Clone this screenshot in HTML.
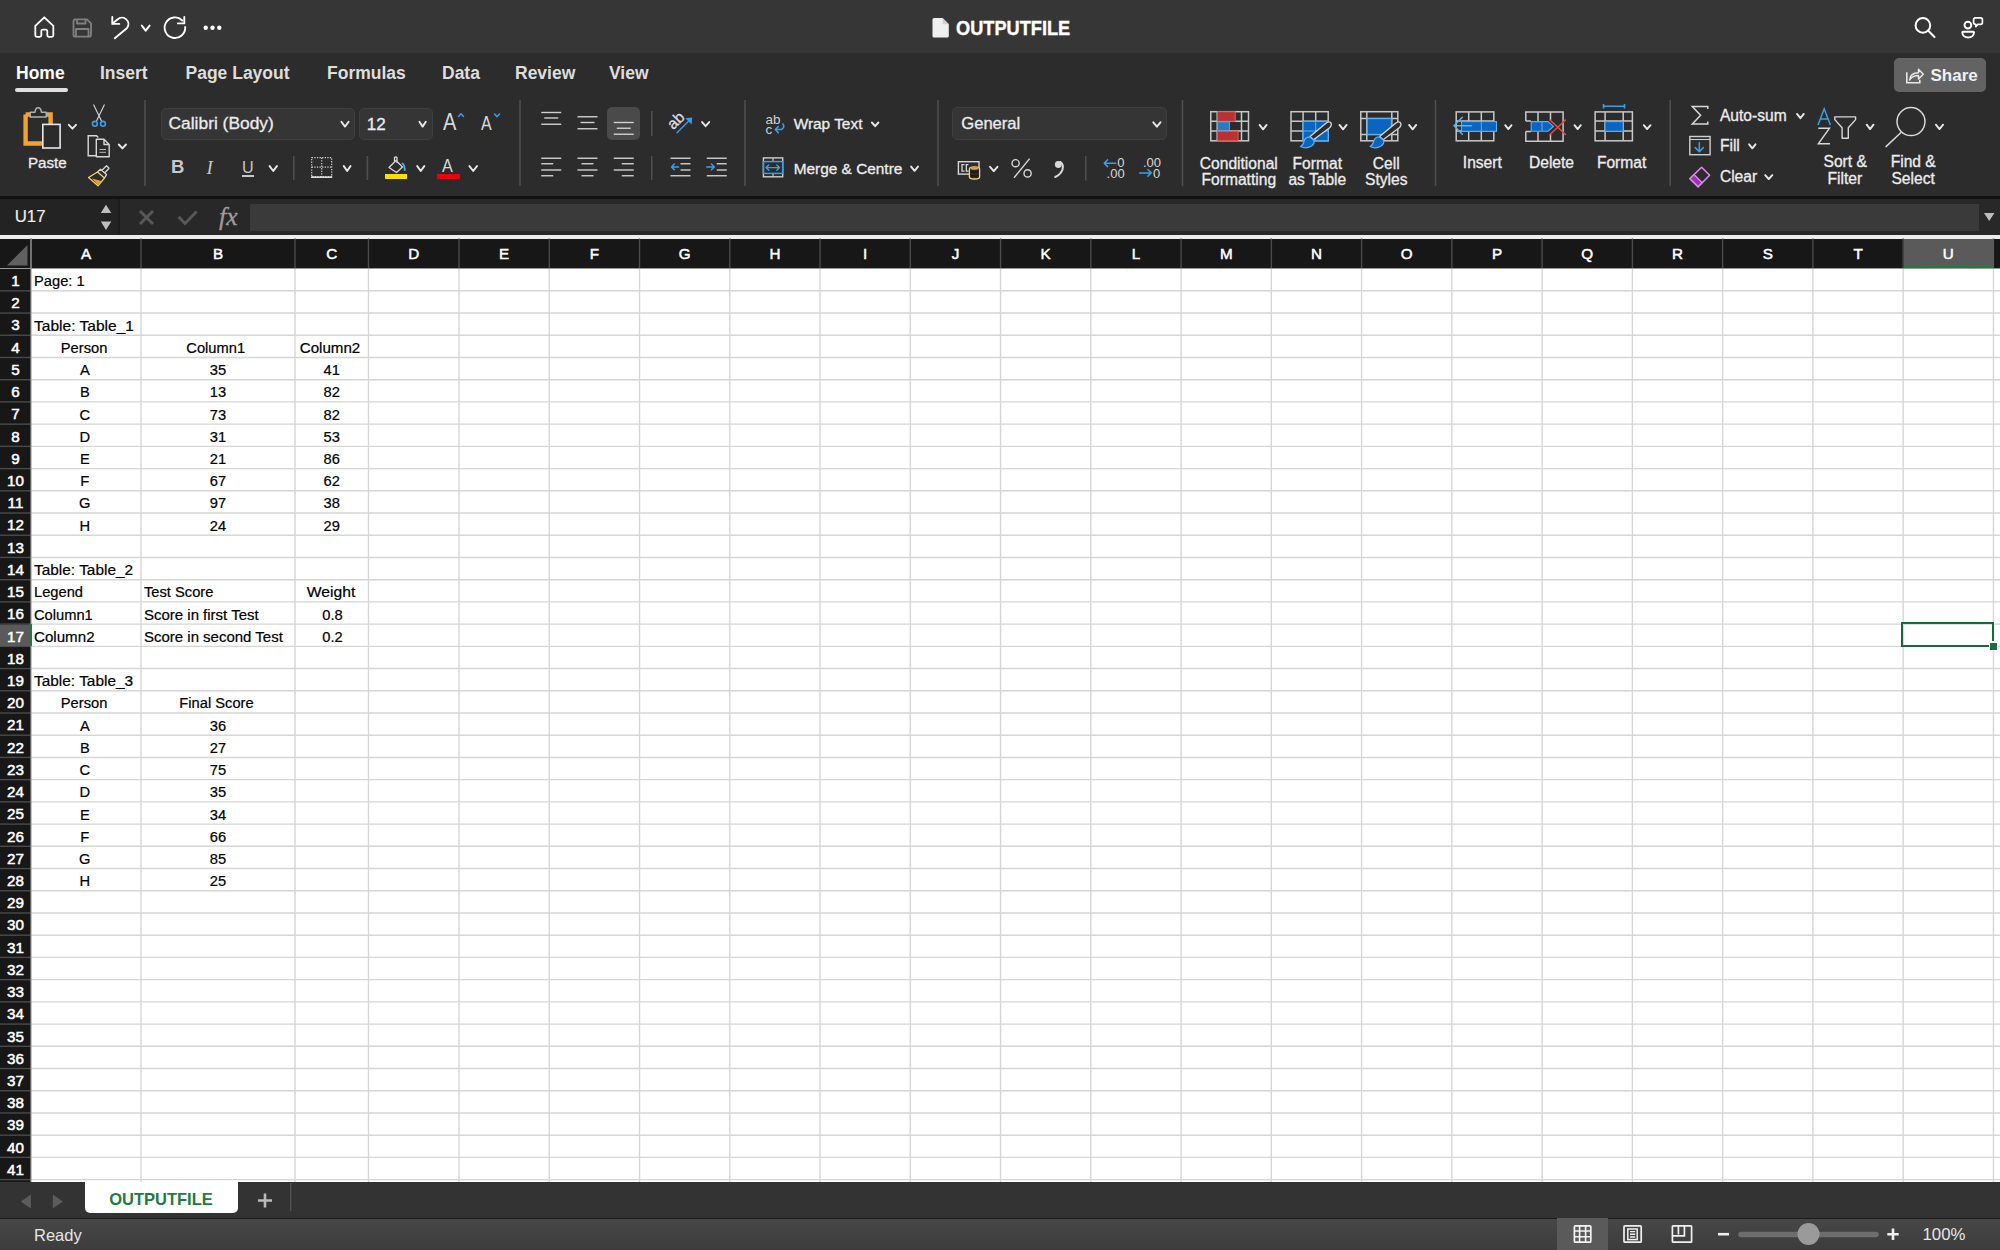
<!DOCTYPE html>
<html><head><meta charset="utf-8"><title>OUTPUTFILE</title>
<style>
html,body{margin:0;padding:0;width:2000px;height:1250px;overflow:hidden;background:#2c2c2c;}
body{position:relative;font-family:"Liberation Sans",sans-serif;}
svg{position:absolute;overflow:visible;}
</style></head><body>

<div style="position:absolute;left:0px;top:0px;width:2000px;height:53px;background:#363636;"></div>
<div style="position:absolute;left:0px;top:53px;width:2000px;height:144px;background:#2c2c2c;"></div>
<div style="position:absolute;left:0px;top:196px;width:2000px;height:3px;background:#121212;"></div>
<div style="position:absolute;left:0px;top:199px;width:2000px;height:36px;background:#282828;"></div>
<div style="position:absolute;left:0px;top:199px;width:118px;height:36px;background:#232323;"></div>
<div style="position:absolute;left:118px;top:199px;width:1.5px;height:36px;background:#1c1c1c;"></div>
<div style="position:absolute;left:250px;top:204px;width:1729px;height:26.5px;background:#3a3a3a;"></div>
<div style="position:absolute;left:0px;top:235px;width:2000px;height:3.5px;background:#ededed;"></div>
<div style="position:absolute;left:0px;top:238.5px;width:2000px;height:30px;background:#171717;"></div>
<div style="position:absolute;left:0px;top:268.5px;width:31px;height:913.5px;background:#171717;"></div>
<div style="position:absolute;left:31px;top:268.5px;width:1969px;height:913.5px;background:#ffffff;"></div>
<div style="position:absolute;left:0px;top:1182px;width:2000px;height:37px;background:#333333;"></div>
<div style="position:absolute;left:0;top:1219px;width:2000px;height:31px;background:linear-gradient(#474747,#3c3c3c);"></div>
<div style="position:absolute;left:0px;top:1217.5px;width:2000px;height:1.8px;background:#1c1c1c;"></div>
<svg style="left:0;top:0" width="2000" height="1250"><line x1="31" y1="290.82" x2="2000" y2="290.82" stroke="#d6d6d6" stroke-width="1.4"/><line x1="31" y1="313.04" x2="2000" y2="313.04" stroke="#d6d6d6" stroke-width="1.4"/><line x1="31" y1="335.26" x2="2000" y2="335.26" stroke="#d6d6d6" stroke-width="1.4"/><line x1="31" y1="357.48" x2="2000" y2="357.48" stroke="#d6d6d6" stroke-width="1.4"/><line x1="31" y1="379.70" x2="2000" y2="379.70" stroke="#d6d6d6" stroke-width="1.4"/><line x1="31" y1="401.92" x2="2000" y2="401.92" stroke="#d6d6d6" stroke-width="1.4"/><line x1="31" y1="424.14" x2="2000" y2="424.14" stroke="#d6d6d6" stroke-width="1.4"/><line x1="31" y1="446.36" x2="2000" y2="446.36" stroke="#d6d6d6" stroke-width="1.4"/><line x1="31" y1="468.58" x2="2000" y2="468.58" stroke="#d6d6d6" stroke-width="1.4"/><line x1="31" y1="490.80" x2="2000" y2="490.80" stroke="#d6d6d6" stroke-width="1.4"/><line x1="31" y1="513.02" x2="2000" y2="513.02" stroke="#d6d6d6" stroke-width="1.4"/><line x1="31" y1="535.24" x2="2000" y2="535.24" stroke="#d6d6d6" stroke-width="1.4"/><line x1="31" y1="557.46" x2="2000" y2="557.46" stroke="#d6d6d6" stroke-width="1.4"/><line x1="31" y1="579.68" x2="2000" y2="579.68" stroke="#d6d6d6" stroke-width="1.4"/><line x1="31" y1="601.90" x2="2000" y2="601.90" stroke="#d6d6d6" stroke-width="1.4"/><line x1="31" y1="624.12" x2="2000" y2="624.12" stroke="#d6d6d6" stroke-width="1.4"/><line x1="31" y1="646.34" x2="2000" y2="646.34" stroke="#d6d6d6" stroke-width="1.4"/><line x1="31" y1="668.56" x2="2000" y2="668.56" stroke="#d6d6d6" stroke-width="1.4"/><line x1="31" y1="690.78" x2="2000" y2="690.78" stroke="#d6d6d6" stroke-width="1.4"/><line x1="31" y1="713.00" x2="2000" y2="713.00" stroke="#d6d6d6" stroke-width="1.4"/><line x1="31" y1="735.22" x2="2000" y2="735.22" stroke="#d6d6d6" stroke-width="1.4"/><line x1="31" y1="757.44" x2="2000" y2="757.44" stroke="#d6d6d6" stroke-width="1.4"/><line x1="31" y1="779.66" x2="2000" y2="779.66" stroke="#d6d6d6" stroke-width="1.4"/><line x1="31" y1="801.88" x2="2000" y2="801.88" stroke="#d6d6d6" stroke-width="1.4"/><line x1="31" y1="824.10" x2="2000" y2="824.10" stroke="#d6d6d6" stroke-width="1.4"/><line x1="31" y1="846.32" x2="2000" y2="846.32" stroke="#d6d6d6" stroke-width="1.4"/><line x1="31" y1="868.54" x2="2000" y2="868.54" stroke="#d6d6d6" stroke-width="1.4"/><line x1="31" y1="890.76" x2="2000" y2="890.76" stroke="#d6d6d6" stroke-width="1.4"/><line x1="31" y1="912.98" x2="2000" y2="912.98" stroke="#d6d6d6" stroke-width="1.4"/><line x1="31" y1="935.20" x2="2000" y2="935.20" stroke="#d6d6d6" stroke-width="1.4"/><line x1="31" y1="957.42" x2="2000" y2="957.42" stroke="#d6d6d6" stroke-width="1.4"/><line x1="31" y1="979.64" x2="2000" y2="979.64" stroke="#d6d6d6" stroke-width="1.4"/><line x1="31" y1="1001.86" x2="2000" y2="1001.86" stroke="#d6d6d6" stroke-width="1.4"/><line x1="31" y1="1024.08" x2="2000" y2="1024.08" stroke="#d6d6d6" stroke-width="1.4"/><line x1="31" y1="1046.30" x2="2000" y2="1046.30" stroke="#d6d6d6" stroke-width="1.4"/><line x1="31" y1="1068.52" x2="2000" y2="1068.52" stroke="#d6d6d6" stroke-width="1.4"/><line x1="31" y1="1090.74" x2="2000" y2="1090.74" stroke="#d6d6d6" stroke-width="1.4"/><line x1="31" y1="1112.96" x2="2000" y2="1112.96" stroke="#d6d6d6" stroke-width="1.4"/><line x1="31" y1="1135.18" x2="2000" y2="1135.18" stroke="#d6d6d6" stroke-width="1.4"/><line x1="31" y1="1157.40" x2="2000" y2="1157.40" stroke="#d6d6d6" stroke-width="1.4"/><line x1="31" y1="1179.62" x2="2000" y2="1179.62" stroke="#d6d6d6" stroke-width="1.4"/><line x1="141.00" y1="268.5" x2="141.00" y2="1182" stroke="#d6d6d6" stroke-width="1.4"/><line x1="295.00" y1="268.5" x2="295.00" y2="1182" stroke="#d6d6d6" stroke-width="1.4"/><line x1="368.50" y1="268.5" x2="368.50" y2="1182" stroke="#d6d6d6" stroke-width="1.4"/><line x1="459.00" y1="268.5" x2="459.00" y2="1182" stroke="#d6d6d6" stroke-width="1.4"/><line x1="549.26" y1="268.5" x2="549.26" y2="1182" stroke="#d6d6d6" stroke-width="1.4"/><line x1="639.52" y1="268.5" x2="639.52" y2="1182" stroke="#d6d6d6" stroke-width="1.4"/><line x1="729.78" y1="268.5" x2="729.78" y2="1182" stroke="#d6d6d6" stroke-width="1.4"/><line x1="820.04" y1="268.5" x2="820.04" y2="1182" stroke="#d6d6d6" stroke-width="1.4"/><line x1="910.30" y1="268.5" x2="910.30" y2="1182" stroke="#d6d6d6" stroke-width="1.4"/><line x1="1000.56" y1="268.5" x2="1000.56" y2="1182" stroke="#d6d6d6" stroke-width="1.4"/><line x1="1090.82" y1="268.5" x2="1090.82" y2="1182" stroke="#d6d6d6" stroke-width="1.4"/><line x1="1181.08" y1="268.5" x2="1181.08" y2="1182" stroke="#d6d6d6" stroke-width="1.4"/><line x1="1271.34" y1="268.5" x2="1271.34" y2="1182" stroke="#d6d6d6" stroke-width="1.4"/><line x1="1361.60" y1="268.5" x2="1361.60" y2="1182" stroke="#d6d6d6" stroke-width="1.4"/><line x1="1451.86" y1="268.5" x2="1451.86" y2="1182" stroke="#d6d6d6" stroke-width="1.4"/><line x1="1542.12" y1="268.5" x2="1542.12" y2="1182" stroke="#d6d6d6" stroke-width="1.4"/><line x1="1632.38" y1="268.5" x2="1632.38" y2="1182" stroke="#d6d6d6" stroke-width="1.4"/><line x1="1722.64" y1="268.5" x2="1722.64" y2="1182" stroke="#d6d6d6" stroke-width="1.4"/><line x1="1812.90" y1="268.5" x2="1812.90" y2="1182" stroke="#d6d6d6" stroke-width="1.4"/><line x1="1903.16" y1="268.5" x2="1903.16" y2="1182" stroke="#d6d6d6" stroke-width="1.4"/><line x1="1993.42" y1="268.5" x2="1993.42" y2="1182" stroke="#d6d6d6" stroke-width="1.4"/><line x1="31.00" y1="238.5" x2="31.00" y2="268.5" stroke="#4a4a4a" stroke-width="1.4"/><line x1="141.00" y1="238.5" x2="141.00" y2="268.5" stroke="#4a4a4a" stroke-width="1.4"/><line x1="295.00" y1="238.5" x2="295.00" y2="268.5" stroke="#4a4a4a" stroke-width="1.4"/><line x1="368.50" y1="238.5" x2="368.50" y2="268.5" stroke="#4a4a4a" stroke-width="1.4"/><line x1="459.00" y1="238.5" x2="459.00" y2="268.5" stroke="#4a4a4a" stroke-width="1.4"/><line x1="549.26" y1="238.5" x2="549.26" y2="268.5" stroke="#4a4a4a" stroke-width="1.4"/><line x1="639.52" y1="238.5" x2="639.52" y2="268.5" stroke="#4a4a4a" stroke-width="1.4"/><line x1="729.78" y1="238.5" x2="729.78" y2="268.5" stroke="#4a4a4a" stroke-width="1.4"/><line x1="820.04" y1="238.5" x2="820.04" y2="268.5" stroke="#4a4a4a" stroke-width="1.4"/><line x1="910.30" y1="238.5" x2="910.30" y2="268.5" stroke="#4a4a4a" stroke-width="1.4"/><line x1="1000.56" y1="238.5" x2="1000.56" y2="268.5" stroke="#4a4a4a" stroke-width="1.4"/><line x1="1090.82" y1="238.5" x2="1090.82" y2="268.5" stroke="#4a4a4a" stroke-width="1.4"/><line x1="1181.08" y1="238.5" x2="1181.08" y2="268.5" stroke="#4a4a4a" stroke-width="1.4"/><line x1="1271.34" y1="238.5" x2="1271.34" y2="268.5" stroke="#4a4a4a" stroke-width="1.4"/><line x1="1361.60" y1="238.5" x2="1361.60" y2="268.5" stroke="#4a4a4a" stroke-width="1.4"/><line x1="1451.86" y1="238.5" x2="1451.86" y2="268.5" stroke="#4a4a4a" stroke-width="1.4"/><line x1="1542.12" y1="238.5" x2="1542.12" y2="268.5" stroke="#4a4a4a" stroke-width="1.4"/><line x1="1632.38" y1="238.5" x2="1632.38" y2="268.5" stroke="#4a4a4a" stroke-width="1.4"/><line x1="1722.64" y1="238.5" x2="1722.64" y2="268.5" stroke="#4a4a4a" stroke-width="1.4"/><line x1="1812.90" y1="238.5" x2="1812.90" y2="268.5" stroke="#4a4a4a" stroke-width="1.4"/><line x1="1903.16" y1="238.5" x2="1903.16" y2="268.5" stroke="#4a4a4a" stroke-width="1.4"/><line x1="1993.42" y1="238.5" x2="1993.42" y2="268.5" stroke="#4a4a4a" stroke-width="1.4"/><line x1="0" y1="290.82" x2="31" y2="290.82" stroke="#4a4a4a" stroke-width="1.4"/><line x1="0" y1="313.04" x2="31" y2="313.04" stroke="#4a4a4a" stroke-width="1.4"/><line x1="0" y1="335.26" x2="31" y2="335.26" stroke="#4a4a4a" stroke-width="1.4"/><line x1="0" y1="357.48" x2="31" y2="357.48" stroke="#4a4a4a" stroke-width="1.4"/><line x1="0" y1="379.70" x2="31" y2="379.70" stroke="#4a4a4a" stroke-width="1.4"/><line x1="0" y1="401.92" x2="31" y2="401.92" stroke="#4a4a4a" stroke-width="1.4"/><line x1="0" y1="424.14" x2="31" y2="424.14" stroke="#4a4a4a" stroke-width="1.4"/><line x1="0" y1="446.36" x2="31" y2="446.36" stroke="#4a4a4a" stroke-width="1.4"/><line x1="0" y1="468.58" x2="31" y2="468.58" stroke="#4a4a4a" stroke-width="1.4"/><line x1="0" y1="490.80" x2="31" y2="490.80" stroke="#4a4a4a" stroke-width="1.4"/><line x1="0" y1="513.02" x2="31" y2="513.02" stroke="#4a4a4a" stroke-width="1.4"/><line x1="0" y1="535.24" x2="31" y2="535.24" stroke="#4a4a4a" stroke-width="1.4"/><line x1="0" y1="557.46" x2="31" y2="557.46" stroke="#4a4a4a" stroke-width="1.4"/><line x1="0" y1="579.68" x2="31" y2="579.68" stroke="#4a4a4a" stroke-width="1.4"/><line x1="0" y1="601.90" x2="31" y2="601.90" stroke="#4a4a4a" stroke-width="1.4"/><line x1="0" y1="624.12" x2="31" y2="624.12" stroke="#4a4a4a" stroke-width="1.4"/><line x1="0" y1="646.34" x2="31" y2="646.34" stroke="#4a4a4a" stroke-width="1.4"/><line x1="0" y1="668.56" x2="31" y2="668.56" stroke="#4a4a4a" stroke-width="1.4"/><line x1="0" y1="690.78" x2="31" y2="690.78" stroke="#4a4a4a" stroke-width="1.4"/><line x1="0" y1="713.00" x2="31" y2="713.00" stroke="#4a4a4a" stroke-width="1.4"/><line x1="0" y1="735.22" x2="31" y2="735.22" stroke="#4a4a4a" stroke-width="1.4"/><line x1="0" y1="757.44" x2="31" y2="757.44" stroke="#4a4a4a" stroke-width="1.4"/><line x1="0" y1="779.66" x2="31" y2="779.66" stroke="#4a4a4a" stroke-width="1.4"/><line x1="0" y1="801.88" x2="31" y2="801.88" stroke="#4a4a4a" stroke-width="1.4"/><line x1="0" y1="824.10" x2="31" y2="824.10" stroke="#4a4a4a" stroke-width="1.4"/><line x1="0" y1="846.32" x2="31" y2="846.32" stroke="#4a4a4a" stroke-width="1.4"/><line x1="0" y1="868.54" x2="31" y2="868.54" stroke="#4a4a4a" stroke-width="1.4"/><line x1="0" y1="890.76" x2="31" y2="890.76" stroke="#4a4a4a" stroke-width="1.4"/><line x1="0" y1="912.98" x2="31" y2="912.98" stroke="#4a4a4a" stroke-width="1.4"/><line x1="0" y1="935.20" x2="31" y2="935.20" stroke="#4a4a4a" stroke-width="1.4"/><line x1="0" y1="957.42" x2="31" y2="957.42" stroke="#4a4a4a" stroke-width="1.4"/><line x1="0" y1="979.64" x2="31" y2="979.64" stroke="#4a4a4a" stroke-width="1.4"/><line x1="0" y1="1001.86" x2="31" y2="1001.86" stroke="#4a4a4a" stroke-width="1.4"/><line x1="0" y1="1024.08" x2="31" y2="1024.08" stroke="#4a4a4a" stroke-width="1.4"/><line x1="0" y1="1046.30" x2="31" y2="1046.30" stroke="#4a4a4a" stroke-width="1.4"/><line x1="0" y1="1068.52" x2="31" y2="1068.52" stroke="#4a4a4a" stroke-width="1.4"/><line x1="0" y1="1090.74" x2="31" y2="1090.74" stroke="#4a4a4a" stroke-width="1.4"/><line x1="0" y1="1112.96" x2="31" y2="1112.96" stroke="#4a4a4a" stroke-width="1.4"/><line x1="0" y1="1135.18" x2="31" y2="1135.18" stroke="#4a4a4a" stroke-width="1.4"/><line x1="0" y1="1157.40" x2="31" y2="1157.40" stroke="#4a4a4a" stroke-width="1.4"/><line x1="0" y1="1179.62" x2="31" y2="1179.62" stroke="#4a4a4a" stroke-width="1.4"/><line x1="0" y1="268.5" x2="2000" y2="268.5" stroke="#9a9a9a" stroke-width="1.2"/><line x1="31" y1="238.5" x2="31" y2="1182" stroke="#9a9a9a" stroke-width="1.2"/></svg>
<div style="position:absolute;left:1903.5px;top:238.5px;width:90px;height:29.5px;background:#5a5a5a;"></div>
<div style="position:absolute;left:1903.5px;top:265.5px;width:90px;height:2.5px;background:#1e7b43;"></div>
<div style="position:absolute;left:0px;top:624.82px;width:29px;height:20.8px;background:#5a5a5a;"></div>
<div style="position:absolute;left:28.8px;top:624.12px;width:3px;height:22.3px;background:#1e7b43;"></div>
<div style="position:absolute;left:46.00px;top:246.33px;width:80px;text-align:center;font:400 15.2px/15.2px 'Liberation Sans', sans-serif;color:#ffffff;white-space:nowrap;letter-spacing:0px;-webkit-text-stroke:0.5px #fff;">A</div>
<div style="position:absolute;left:178.00px;top:246.33px;width:80px;text-align:center;font:400 15.2px/15.2px 'Liberation Sans', sans-serif;color:#ffffff;white-space:nowrap;letter-spacing:0px;-webkit-text-stroke:0.5px #fff;">B</div>
<div style="position:absolute;left:291.75px;top:246.33px;width:80px;text-align:center;font:400 15.2px/15.2px 'Liberation Sans', sans-serif;color:#ffffff;white-space:nowrap;letter-spacing:0px;-webkit-text-stroke:0.5px #fff;">C</div>
<div style="position:absolute;left:373.75px;top:246.33px;width:80px;text-align:center;font:400 15.2px/15.2px 'Liberation Sans', sans-serif;color:#ffffff;white-space:nowrap;letter-spacing:0px;-webkit-text-stroke:0.5px #fff;">D</div>
<div style="position:absolute;left:464.13px;top:246.33px;width:80px;text-align:center;font:400 15.2px/15.2px 'Liberation Sans', sans-serif;color:#ffffff;white-space:nowrap;letter-spacing:0px;-webkit-text-stroke:0.5px #fff;">E</div>
<div style="position:absolute;left:554.39px;top:246.33px;width:80px;text-align:center;font:400 15.2px/15.2px 'Liberation Sans', sans-serif;color:#ffffff;white-space:nowrap;letter-spacing:0px;-webkit-text-stroke:0.5px #fff;">F</div>
<div style="position:absolute;left:644.65px;top:246.33px;width:80px;text-align:center;font:400 15.2px/15.2px 'Liberation Sans', sans-serif;color:#ffffff;white-space:nowrap;letter-spacing:0px;-webkit-text-stroke:0.5px #fff;">G</div>
<div style="position:absolute;left:734.91px;top:246.33px;width:80px;text-align:center;font:400 15.2px/15.2px 'Liberation Sans', sans-serif;color:#ffffff;white-space:nowrap;letter-spacing:0px;-webkit-text-stroke:0.5px #fff;">H</div>
<div style="position:absolute;left:825.17px;top:246.33px;width:80px;text-align:center;font:400 15.2px/15.2px 'Liberation Sans', sans-serif;color:#ffffff;white-space:nowrap;letter-spacing:0px;-webkit-text-stroke:0.5px #fff;">I</div>
<div style="position:absolute;left:915.43px;top:246.33px;width:80px;text-align:center;font:400 15.2px/15.2px 'Liberation Sans', sans-serif;color:#ffffff;white-space:nowrap;letter-spacing:0px;-webkit-text-stroke:0.5px #fff;">J</div>
<div style="position:absolute;left:1005.69px;top:246.33px;width:80px;text-align:center;font:400 15.2px/15.2px 'Liberation Sans', sans-serif;color:#ffffff;white-space:nowrap;letter-spacing:0px;-webkit-text-stroke:0.5px #fff;">K</div>
<div style="position:absolute;left:1095.95px;top:246.33px;width:80px;text-align:center;font:400 15.2px/15.2px 'Liberation Sans', sans-serif;color:#ffffff;white-space:nowrap;letter-spacing:0px;-webkit-text-stroke:0.5px #fff;">L</div>
<div style="position:absolute;left:1186.21px;top:246.33px;width:80px;text-align:center;font:400 15.2px/15.2px 'Liberation Sans', sans-serif;color:#ffffff;white-space:nowrap;letter-spacing:0px;-webkit-text-stroke:0.5px #fff;">M</div>
<div style="position:absolute;left:1276.47px;top:246.33px;width:80px;text-align:center;font:400 15.2px/15.2px 'Liberation Sans', sans-serif;color:#ffffff;white-space:nowrap;letter-spacing:0px;-webkit-text-stroke:0.5px #fff;">N</div>
<div style="position:absolute;left:1366.73px;top:246.33px;width:80px;text-align:center;font:400 15.2px/15.2px 'Liberation Sans', sans-serif;color:#ffffff;white-space:nowrap;letter-spacing:0px;-webkit-text-stroke:0.5px #fff;">O</div>
<div style="position:absolute;left:1456.99px;top:246.33px;width:80px;text-align:center;font:400 15.2px/15.2px 'Liberation Sans', sans-serif;color:#ffffff;white-space:nowrap;letter-spacing:0px;-webkit-text-stroke:0.5px #fff;">P</div>
<div style="position:absolute;left:1547.25px;top:246.33px;width:80px;text-align:center;font:400 15.2px/15.2px 'Liberation Sans', sans-serif;color:#ffffff;white-space:nowrap;letter-spacing:0px;-webkit-text-stroke:0.5px #fff;">Q</div>
<div style="position:absolute;left:1637.51px;top:246.33px;width:80px;text-align:center;font:400 15.2px/15.2px 'Liberation Sans', sans-serif;color:#ffffff;white-space:nowrap;letter-spacing:0px;-webkit-text-stroke:0.5px #fff;">R</div>
<div style="position:absolute;left:1727.77px;top:246.33px;width:80px;text-align:center;font:400 15.2px/15.2px 'Liberation Sans', sans-serif;color:#ffffff;white-space:nowrap;letter-spacing:0px;-webkit-text-stroke:0.5px #fff;">S</div>
<div style="position:absolute;left:1818.03px;top:246.33px;width:80px;text-align:center;font:400 15.2px/15.2px 'Liberation Sans', sans-serif;color:#ffffff;white-space:nowrap;letter-spacing:0px;-webkit-text-stroke:0.5px #fff;">T</div>
<div style="position:absolute;left:1908.29px;top:246.33px;width:80px;text-align:center;font:400 15.2px/15.2px 'Liberation Sans', sans-serif;color:#ffffff;white-space:nowrap;letter-spacing:0px;-webkit-text-stroke:0.5px #fff;">U</div>
<div style="position:absolute;left:0.50px;top:273.03px;width:30px;text-align:center;font:400 15.2px/15.2px 'Liberation Sans', sans-serif;color:#ffffff;white-space:nowrap;letter-spacing:0px;-webkit-text-stroke:0.5px #fff;">1</div>
<div style="position:absolute;left:0.50px;top:295.25px;width:30px;text-align:center;font:400 15.2px/15.2px 'Liberation Sans', sans-serif;color:#ffffff;white-space:nowrap;letter-spacing:0px;-webkit-text-stroke:0.5px #fff;">2</div>
<div style="position:absolute;left:0.50px;top:317.47px;width:30px;text-align:center;font:400 15.2px/15.2px 'Liberation Sans', sans-serif;color:#ffffff;white-space:nowrap;letter-spacing:0px;-webkit-text-stroke:0.5px #fff;">3</div>
<div style="position:absolute;left:0.50px;top:339.69px;width:30px;text-align:center;font:400 15.2px/15.2px 'Liberation Sans', sans-serif;color:#ffffff;white-space:nowrap;letter-spacing:0px;-webkit-text-stroke:0.5px #fff;">4</div>
<div style="position:absolute;left:0.50px;top:361.91px;width:30px;text-align:center;font:400 15.2px/15.2px 'Liberation Sans', sans-serif;color:#ffffff;white-space:nowrap;letter-spacing:0px;-webkit-text-stroke:0.5px #fff;">5</div>
<div style="position:absolute;left:0.50px;top:384.13px;width:30px;text-align:center;font:400 15.2px/15.2px 'Liberation Sans', sans-serif;color:#ffffff;white-space:nowrap;letter-spacing:0px;-webkit-text-stroke:0.5px #fff;">6</div>
<div style="position:absolute;left:0.50px;top:406.35px;width:30px;text-align:center;font:400 15.2px/15.2px 'Liberation Sans', sans-serif;color:#ffffff;white-space:nowrap;letter-spacing:0px;-webkit-text-stroke:0.5px #fff;">7</div>
<div style="position:absolute;left:0.50px;top:428.57px;width:30px;text-align:center;font:400 15.2px/15.2px 'Liberation Sans', sans-serif;color:#ffffff;white-space:nowrap;letter-spacing:0px;-webkit-text-stroke:0.5px #fff;">8</div>
<div style="position:absolute;left:0.50px;top:450.79px;width:30px;text-align:center;font:400 15.2px/15.2px 'Liberation Sans', sans-serif;color:#ffffff;white-space:nowrap;letter-spacing:0px;-webkit-text-stroke:0.5px #fff;">9</div>
<div style="position:absolute;left:0.50px;top:473.01px;width:30px;text-align:center;font:400 15.2px/15.2px 'Liberation Sans', sans-serif;color:#ffffff;white-space:nowrap;letter-spacing:0px;-webkit-text-stroke:0.5px #fff;">10</div>
<div style="position:absolute;left:0.50px;top:495.23px;width:30px;text-align:center;font:400 15.2px/15.2px 'Liberation Sans', sans-serif;color:#ffffff;white-space:nowrap;letter-spacing:0px;-webkit-text-stroke:0.5px #fff;">11</div>
<div style="position:absolute;left:0.50px;top:517.45px;width:30px;text-align:center;font:400 15.2px/15.2px 'Liberation Sans', sans-serif;color:#ffffff;white-space:nowrap;letter-spacing:0px;-webkit-text-stroke:0.5px #fff;">12</div>
<div style="position:absolute;left:0.50px;top:539.67px;width:30px;text-align:center;font:400 15.2px/15.2px 'Liberation Sans', sans-serif;color:#ffffff;white-space:nowrap;letter-spacing:0px;-webkit-text-stroke:0.5px #fff;">13</div>
<div style="position:absolute;left:0.50px;top:561.89px;width:30px;text-align:center;font:400 15.2px/15.2px 'Liberation Sans', sans-serif;color:#ffffff;white-space:nowrap;letter-spacing:0px;-webkit-text-stroke:0.5px #fff;">14</div>
<div style="position:absolute;left:0.50px;top:584.11px;width:30px;text-align:center;font:400 15.2px/15.2px 'Liberation Sans', sans-serif;color:#ffffff;white-space:nowrap;letter-spacing:0px;-webkit-text-stroke:0.5px #fff;">15</div>
<div style="position:absolute;left:0.50px;top:606.33px;width:30px;text-align:center;font:400 15.2px/15.2px 'Liberation Sans', sans-serif;color:#ffffff;white-space:nowrap;letter-spacing:0px;-webkit-text-stroke:0.5px #fff;">16</div>
<div style="position:absolute;left:0.50px;top:628.55px;width:30px;text-align:center;font:400 15.2px/15.2px 'Liberation Sans', sans-serif;color:#ffffff;white-space:nowrap;letter-spacing:0px;-webkit-text-stroke:0.5px #fff;">17</div>
<div style="position:absolute;left:0.50px;top:650.77px;width:30px;text-align:center;font:400 15.2px/15.2px 'Liberation Sans', sans-serif;color:#ffffff;white-space:nowrap;letter-spacing:0px;-webkit-text-stroke:0.5px #fff;">18</div>
<div style="position:absolute;left:0.50px;top:672.99px;width:30px;text-align:center;font:400 15.2px/15.2px 'Liberation Sans', sans-serif;color:#ffffff;white-space:nowrap;letter-spacing:0px;-webkit-text-stroke:0.5px #fff;">19</div>
<div style="position:absolute;left:0.50px;top:695.21px;width:30px;text-align:center;font:400 15.2px/15.2px 'Liberation Sans', sans-serif;color:#ffffff;white-space:nowrap;letter-spacing:0px;-webkit-text-stroke:0.5px #fff;">20</div>
<div style="position:absolute;left:0.50px;top:717.43px;width:30px;text-align:center;font:400 15.2px/15.2px 'Liberation Sans', sans-serif;color:#ffffff;white-space:nowrap;letter-spacing:0px;-webkit-text-stroke:0.5px #fff;">21</div>
<div style="position:absolute;left:0.50px;top:739.65px;width:30px;text-align:center;font:400 15.2px/15.2px 'Liberation Sans', sans-serif;color:#ffffff;white-space:nowrap;letter-spacing:0px;-webkit-text-stroke:0.5px #fff;">22</div>
<div style="position:absolute;left:0.50px;top:761.87px;width:30px;text-align:center;font:400 15.2px/15.2px 'Liberation Sans', sans-serif;color:#ffffff;white-space:nowrap;letter-spacing:0px;-webkit-text-stroke:0.5px #fff;">23</div>
<div style="position:absolute;left:0.50px;top:784.09px;width:30px;text-align:center;font:400 15.2px/15.2px 'Liberation Sans', sans-serif;color:#ffffff;white-space:nowrap;letter-spacing:0px;-webkit-text-stroke:0.5px #fff;">24</div>
<div style="position:absolute;left:0.50px;top:806.31px;width:30px;text-align:center;font:400 15.2px/15.2px 'Liberation Sans', sans-serif;color:#ffffff;white-space:nowrap;letter-spacing:0px;-webkit-text-stroke:0.5px #fff;">25</div>
<div style="position:absolute;left:0.50px;top:828.53px;width:30px;text-align:center;font:400 15.2px/15.2px 'Liberation Sans', sans-serif;color:#ffffff;white-space:nowrap;letter-spacing:0px;-webkit-text-stroke:0.5px #fff;">26</div>
<div style="position:absolute;left:0.50px;top:850.75px;width:30px;text-align:center;font:400 15.2px/15.2px 'Liberation Sans', sans-serif;color:#ffffff;white-space:nowrap;letter-spacing:0px;-webkit-text-stroke:0.5px #fff;">27</div>
<div style="position:absolute;left:0.50px;top:872.97px;width:30px;text-align:center;font:400 15.2px/15.2px 'Liberation Sans', sans-serif;color:#ffffff;white-space:nowrap;letter-spacing:0px;-webkit-text-stroke:0.5px #fff;">28</div>
<div style="position:absolute;left:0.50px;top:895.19px;width:30px;text-align:center;font:400 15.2px/15.2px 'Liberation Sans', sans-serif;color:#ffffff;white-space:nowrap;letter-spacing:0px;-webkit-text-stroke:0.5px #fff;">29</div>
<div style="position:absolute;left:0.50px;top:917.41px;width:30px;text-align:center;font:400 15.2px/15.2px 'Liberation Sans', sans-serif;color:#ffffff;white-space:nowrap;letter-spacing:0px;-webkit-text-stroke:0.5px #fff;">30</div>
<div style="position:absolute;left:0.50px;top:939.63px;width:30px;text-align:center;font:400 15.2px/15.2px 'Liberation Sans', sans-serif;color:#ffffff;white-space:nowrap;letter-spacing:0px;-webkit-text-stroke:0.5px #fff;">31</div>
<div style="position:absolute;left:0.50px;top:961.85px;width:30px;text-align:center;font:400 15.2px/15.2px 'Liberation Sans', sans-serif;color:#ffffff;white-space:nowrap;letter-spacing:0px;-webkit-text-stroke:0.5px #fff;">32</div>
<div style="position:absolute;left:0.50px;top:984.07px;width:30px;text-align:center;font:400 15.2px/15.2px 'Liberation Sans', sans-serif;color:#ffffff;white-space:nowrap;letter-spacing:0px;-webkit-text-stroke:0.5px #fff;">33</div>
<div style="position:absolute;left:0.50px;top:1006.29px;width:30px;text-align:center;font:400 15.2px/15.2px 'Liberation Sans', sans-serif;color:#ffffff;white-space:nowrap;letter-spacing:0px;-webkit-text-stroke:0.5px #fff;">34</div>
<div style="position:absolute;left:0.50px;top:1028.51px;width:30px;text-align:center;font:400 15.2px/15.2px 'Liberation Sans', sans-serif;color:#ffffff;white-space:nowrap;letter-spacing:0px;-webkit-text-stroke:0.5px #fff;">35</div>
<div style="position:absolute;left:0.50px;top:1050.73px;width:30px;text-align:center;font:400 15.2px/15.2px 'Liberation Sans', sans-serif;color:#ffffff;white-space:nowrap;letter-spacing:0px;-webkit-text-stroke:0.5px #fff;">36</div>
<div style="position:absolute;left:0.50px;top:1072.95px;width:30px;text-align:center;font:400 15.2px/15.2px 'Liberation Sans', sans-serif;color:#ffffff;white-space:nowrap;letter-spacing:0px;-webkit-text-stroke:0.5px #fff;">37</div>
<div style="position:absolute;left:0.50px;top:1095.17px;width:30px;text-align:center;font:400 15.2px/15.2px 'Liberation Sans', sans-serif;color:#ffffff;white-space:nowrap;letter-spacing:0px;-webkit-text-stroke:0.5px #fff;">38</div>
<div style="position:absolute;left:0.50px;top:1117.39px;width:30px;text-align:center;font:400 15.2px/15.2px 'Liberation Sans', sans-serif;color:#ffffff;white-space:nowrap;letter-spacing:0px;-webkit-text-stroke:0.5px #fff;">39</div>
<div style="position:absolute;left:0.50px;top:1139.61px;width:30px;text-align:center;font:400 15.2px/15.2px 'Liberation Sans', sans-serif;color:#ffffff;white-space:nowrap;letter-spacing:0px;-webkit-text-stroke:0.5px #fff;">40</div>
<div style="position:absolute;left:0.50px;top:1161.83px;width:30px;text-align:center;font:400 15.2px/15.2px 'Liberation Sans', sans-serif;color:#ffffff;white-space:nowrap;letter-spacing:0px;-webkit-text-stroke:0.5px #fff;">41</div>
<svg style="left:0;top:238.5px" width="31" height="30"><polygon points="7,26.5 27.5,6 27.5,26.5" fill="#606060"/></svg>
<div style="position:absolute;left:34.00px;top:274.26px;font:400 14.7px/14.7px 'Liberation Sans', sans-serif;color:#000000;white-space:nowrap;letter-spacing:0px;-webkit-text-stroke:0.2px #000;">Page: 1</div>
<div style="position:absolute;left:34.00px;top:318.70px;font:400 14.7px/14.7px 'Liberation Sans', sans-serif;color:#000000;white-space:nowrap;letter-spacing:0px;transform:scaleX(1.058);transform-origin:left top;-webkit-text-stroke:0.2px #000;">Table: Table_1</div>
<div style="position:absolute;left:4.10px;top:340.92px;width:160px;text-align:center;font:400 14.7px/14.7px 'Liberation Sans', sans-serif;color:#000000;white-space:nowrap;letter-spacing:0px;-webkit-text-stroke:0.2px #000;">Person</div>
<div style="position:absolute;left:135.70px;top:340.92px;width:160px;text-align:center;font:400 14.7px/14.7px 'Liberation Sans', sans-serif;color:#000000;white-space:nowrap;letter-spacing:0px;-webkit-text-stroke:0.2px #000;">Column1</div>
<div style="position:absolute;left:249.65px;top:340.92px;width:160px;text-align:center;font:400 14.7px/14.7px 'Liberation Sans', sans-serif;color:#000000;white-space:nowrap;letter-spacing:0px;transform:scaleX(1.03);transform-origin:center top;-webkit-text-stroke:0.2px #000;">Column2</div>
<div style="position:absolute;left:4.80px;top:363.14px;width:160px;text-align:center;font:400 14.7px/14.7px 'Liberation Sans', sans-serif;color:#000000;white-space:nowrap;letter-spacing:0px;-webkit-text-stroke:0.2px #000;">A</div>
<div style="position:absolute;left:138.00px;top:363.14px;width:160px;text-align:center;font:400 14.7px/14.7px 'Liberation Sans', sans-serif;color:#000000;white-space:nowrap;letter-spacing:0px;-webkit-text-stroke:0.2px #000;">35</div>
<div style="position:absolute;left:251.75px;top:363.14px;width:160px;text-align:center;font:400 14.7px/14.7px 'Liberation Sans', sans-serif;color:#000000;white-space:nowrap;letter-spacing:0px;-webkit-text-stroke:0.2px #000;">41</div>
<div style="position:absolute;left:4.80px;top:385.36px;width:160px;text-align:center;font:400 14.7px/14.7px 'Liberation Sans', sans-serif;color:#000000;white-space:nowrap;letter-spacing:0px;-webkit-text-stroke:0.2px #000;">B</div>
<div style="position:absolute;left:138.00px;top:385.36px;width:160px;text-align:center;font:400 14.7px/14.7px 'Liberation Sans', sans-serif;color:#000000;white-space:nowrap;letter-spacing:0px;-webkit-text-stroke:0.2px #000;">13</div>
<div style="position:absolute;left:251.75px;top:385.36px;width:160px;text-align:center;font:400 14.7px/14.7px 'Liberation Sans', sans-serif;color:#000000;white-space:nowrap;letter-spacing:0px;-webkit-text-stroke:0.2px #000;">82</div>
<div style="position:absolute;left:4.80px;top:407.58px;width:160px;text-align:center;font:400 14.7px/14.7px 'Liberation Sans', sans-serif;color:#000000;white-space:nowrap;letter-spacing:0px;-webkit-text-stroke:0.2px #000;">C</div>
<div style="position:absolute;left:138.00px;top:407.58px;width:160px;text-align:center;font:400 14.7px/14.7px 'Liberation Sans', sans-serif;color:#000000;white-space:nowrap;letter-spacing:0px;-webkit-text-stroke:0.2px #000;">73</div>
<div style="position:absolute;left:251.75px;top:407.58px;width:160px;text-align:center;font:400 14.7px/14.7px 'Liberation Sans', sans-serif;color:#000000;white-space:nowrap;letter-spacing:0px;-webkit-text-stroke:0.2px #000;">82</div>
<div style="position:absolute;left:4.80px;top:429.80px;width:160px;text-align:center;font:400 14.7px/14.7px 'Liberation Sans', sans-serif;color:#000000;white-space:nowrap;letter-spacing:0px;-webkit-text-stroke:0.2px #000;">D</div>
<div style="position:absolute;left:138.00px;top:429.80px;width:160px;text-align:center;font:400 14.7px/14.7px 'Liberation Sans', sans-serif;color:#000000;white-space:nowrap;letter-spacing:0px;-webkit-text-stroke:0.2px #000;">31</div>
<div style="position:absolute;left:251.75px;top:429.80px;width:160px;text-align:center;font:400 14.7px/14.7px 'Liberation Sans', sans-serif;color:#000000;white-space:nowrap;letter-spacing:0px;-webkit-text-stroke:0.2px #000;">53</div>
<div style="position:absolute;left:4.80px;top:452.02px;width:160px;text-align:center;font:400 14.7px/14.7px 'Liberation Sans', sans-serif;color:#000000;white-space:nowrap;letter-spacing:0px;-webkit-text-stroke:0.2px #000;">E</div>
<div style="position:absolute;left:138.00px;top:452.02px;width:160px;text-align:center;font:400 14.7px/14.7px 'Liberation Sans', sans-serif;color:#000000;white-space:nowrap;letter-spacing:0px;-webkit-text-stroke:0.2px #000;">21</div>
<div style="position:absolute;left:251.75px;top:452.02px;width:160px;text-align:center;font:400 14.7px/14.7px 'Liberation Sans', sans-serif;color:#000000;white-space:nowrap;letter-spacing:0px;-webkit-text-stroke:0.2px #000;">86</div>
<div style="position:absolute;left:4.80px;top:474.24px;width:160px;text-align:center;font:400 14.7px/14.7px 'Liberation Sans', sans-serif;color:#000000;white-space:nowrap;letter-spacing:0px;-webkit-text-stroke:0.2px #000;">F</div>
<div style="position:absolute;left:138.00px;top:474.24px;width:160px;text-align:center;font:400 14.7px/14.7px 'Liberation Sans', sans-serif;color:#000000;white-space:nowrap;letter-spacing:0px;-webkit-text-stroke:0.2px #000;">67</div>
<div style="position:absolute;left:251.75px;top:474.24px;width:160px;text-align:center;font:400 14.7px/14.7px 'Liberation Sans', sans-serif;color:#000000;white-space:nowrap;letter-spacing:0px;-webkit-text-stroke:0.2px #000;">62</div>
<div style="position:absolute;left:4.80px;top:496.46px;width:160px;text-align:center;font:400 14.7px/14.7px 'Liberation Sans', sans-serif;color:#000000;white-space:nowrap;letter-spacing:0px;-webkit-text-stroke:0.2px #000;">G</div>
<div style="position:absolute;left:138.00px;top:496.46px;width:160px;text-align:center;font:400 14.7px/14.7px 'Liberation Sans', sans-serif;color:#000000;white-space:nowrap;letter-spacing:0px;-webkit-text-stroke:0.2px #000;">97</div>
<div style="position:absolute;left:251.75px;top:496.46px;width:160px;text-align:center;font:400 14.7px/14.7px 'Liberation Sans', sans-serif;color:#000000;white-space:nowrap;letter-spacing:0px;-webkit-text-stroke:0.2px #000;">38</div>
<div style="position:absolute;left:4.80px;top:518.68px;width:160px;text-align:center;font:400 14.7px/14.7px 'Liberation Sans', sans-serif;color:#000000;white-space:nowrap;letter-spacing:0px;-webkit-text-stroke:0.2px #000;">H</div>
<div style="position:absolute;left:138.00px;top:518.68px;width:160px;text-align:center;font:400 14.7px/14.7px 'Liberation Sans', sans-serif;color:#000000;white-space:nowrap;letter-spacing:0px;-webkit-text-stroke:0.2px #000;">24</div>
<div style="position:absolute;left:251.75px;top:518.68px;width:160px;text-align:center;font:400 14.7px/14.7px 'Liberation Sans', sans-serif;color:#000000;white-space:nowrap;letter-spacing:0px;-webkit-text-stroke:0.2px #000;">29</div>
<div style="position:absolute;left:34.00px;top:563.12px;font:400 14.7px/14.7px 'Liberation Sans', sans-serif;color:#000000;white-space:nowrap;letter-spacing:0px;transform:scaleX(1.05);transform-origin:left top;-webkit-text-stroke:0.2px #000;">Table: Table_2</div>
<div style="position:absolute;left:34.00px;top:585.34px;font:400 14.7px/14.7px 'Liberation Sans', sans-serif;color:#000000;white-space:nowrap;letter-spacing:0px;-webkit-text-stroke:0.2px #000;">Legend</div>
<div style="position:absolute;left:144.00px;top:585.34px;font:400 14.7px/14.7px 'Liberation Sans', sans-serif;color:#000000;white-space:nowrap;letter-spacing:0px;-webkit-text-stroke:0.2px #000;">Test Score</div>
<div style="position:absolute;left:250.75px;top:585.34px;width:160px;text-align:center;font:400 14.7px/14.7px 'Liberation Sans', sans-serif;color:#000000;white-space:nowrap;letter-spacing:0px;transform:scaleX(1.067);transform-origin:center top;-webkit-text-stroke:0.2px #000;">Weight</div>
<div style="position:absolute;left:34.00px;top:607.56px;font:400 14.7px/14.7px 'Liberation Sans', sans-serif;color:#000000;white-space:nowrap;letter-spacing:0px;-webkit-text-stroke:0.2px #000;">Column1</div>
<div style="position:absolute;left:144.00px;top:607.56px;font:400 14.7px/14.7px 'Liberation Sans', sans-serif;color:#000000;white-space:nowrap;letter-spacing:0px;transform:scaleX(1.02);transform-origin:left top;-webkit-text-stroke:0.2px #000;">Score in first Test</div>
<div style="position:absolute;left:252.55px;top:607.56px;width:160px;text-align:center;font:400 14.7px/14.7px 'Liberation Sans', sans-serif;color:#000000;white-space:nowrap;letter-spacing:0px;-webkit-text-stroke:0.2px #000;">0.8</div>
<div style="position:absolute;left:34.00px;top:629.78px;font:400 14.7px/14.7px 'Liberation Sans', sans-serif;color:#000000;white-space:nowrap;letter-spacing:0px;transform:scaleX(1.03);transform-origin:left top;-webkit-text-stroke:0.2px #000;">Column2</div>
<div style="position:absolute;left:144.00px;top:629.78px;font:400 14.7px/14.7px 'Liberation Sans', sans-serif;color:#000000;white-space:nowrap;letter-spacing:0px;transform:scaleX(1.02);transform-origin:left top;-webkit-text-stroke:0.2px #000;">Score in second Test</div>
<div style="position:absolute;left:252.55px;top:629.78px;width:160px;text-align:center;font:400 14.7px/14.7px 'Liberation Sans', sans-serif;color:#000000;white-space:nowrap;letter-spacing:0px;-webkit-text-stroke:0.2px #000;">0.2</div>
<div style="position:absolute;left:34.00px;top:674.22px;font:400 14.7px/14.7px 'Liberation Sans', sans-serif;color:#000000;white-space:nowrap;letter-spacing:0px;transform:scaleX(1.05);transform-origin:left top;-webkit-text-stroke:0.2px #000;">Table: Table_3</div>
<div style="position:absolute;left:4.10px;top:696.44px;width:160px;text-align:center;font:400 14.7px/14.7px 'Liberation Sans', sans-serif;color:#000000;white-space:nowrap;letter-spacing:0px;-webkit-text-stroke:0.2px #000;">Person</div>
<div style="position:absolute;left:136.50px;top:696.44px;width:160px;text-align:center;font:400 14.7px/14.7px 'Liberation Sans', sans-serif;color:#000000;white-space:nowrap;letter-spacing:0px;-webkit-text-stroke:0.2px #000;">Final Score</div>
<div style="position:absolute;left:4.80px;top:718.66px;width:160px;text-align:center;font:400 14.7px/14.7px 'Liberation Sans', sans-serif;color:#000000;white-space:nowrap;letter-spacing:0px;-webkit-text-stroke:0.2px #000;">A</div>
<div style="position:absolute;left:138.00px;top:718.66px;width:160px;text-align:center;font:400 14.7px/14.7px 'Liberation Sans', sans-serif;color:#000000;white-space:nowrap;letter-spacing:0px;-webkit-text-stroke:0.2px #000;">36</div>
<div style="position:absolute;left:4.80px;top:740.88px;width:160px;text-align:center;font:400 14.7px/14.7px 'Liberation Sans', sans-serif;color:#000000;white-space:nowrap;letter-spacing:0px;-webkit-text-stroke:0.2px #000;">B</div>
<div style="position:absolute;left:138.00px;top:740.88px;width:160px;text-align:center;font:400 14.7px/14.7px 'Liberation Sans', sans-serif;color:#000000;white-space:nowrap;letter-spacing:0px;-webkit-text-stroke:0.2px #000;">27</div>
<div style="position:absolute;left:4.80px;top:763.10px;width:160px;text-align:center;font:400 14.7px/14.7px 'Liberation Sans', sans-serif;color:#000000;white-space:nowrap;letter-spacing:0px;-webkit-text-stroke:0.2px #000;">C</div>
<div style="position:absolute;left:138.00px;top:763.10px;width:160px;text-align:center;font:400 14.7px/14.7px 'Liberation Sans', sans-serif;color:#000000;white-space:nowrap;letter-spacing:0px;-webkit-text-stroke:0.2px #000;">75</div>
<div style="position:absolute;left:4.80px;top:785.32px;width:160px;text-align:center;font:400 14.7px/14.7px 'Liberation Sans', sans-serif;color:#000000;white-space:nowrap;letter-spacing:0px;-webkit-text-stroke:0.2px #000;">D</div>
<div style="position:absolute;left:138.00px;top:785.32px;width:160px;text-align:center;font:400 14.7px/14.7px 'Liberation Sans', sans-serif;color:#000000;white-space:nowrap;letter-spacing:0px;-webkit-text-stroke:0.2px #000;">35</div>
<div style="position:absolute;left:4.80px;top:807.54px;width:160px;text-align:center;font:400 14.7px/14.7px 'Liberation Sans', sans-serif;color:#000000;white-space:nowrap;letter-spacing:0px;-webkit-text-stroke:0.2px #000;">E</div>
<div style="position:absolute;left:138.00px;top:807.54px;width:160px;text-align:center;font:400 14.7px/14.7px 'Liberation Sans', sans-serif;color:#000000;white-space:nowrap;letter-spacing:0px;-webkit-text-stroke:0.2px #000;">34</div>
<div style="position:absolute;left:4.80px;top:829.76px;width:160px;text-align:center;font:400 14.7px/14.7px 'Liberation Sans', sans-serif;color:#000000;white-space:nowrap;letter-spacing:0px;-webkit-text-stroke:0.2px #000;">F</div>
<div style="position:absolute;left:138.00px;top:829.76px;width:160px;text-align:center;font:400 14.7px/14.7px 'Liberation Sans', sans-serif;color:#000000;white-space:nowrap;letter-spacing:0px;-webkit-text-stroke:0.2px #000;">66</div>
<div style="position:absolute;left:4.80px;top:851.98px;width:160px;text-align:center;font:400 14.7px/14.7px 'Liberation Sans', sans-serif;color:#000000;white-space:nowrap;letter-spacing:0px;-webkit-text-stroke:0.2px #000;">G</div>
<div style="position:absolute;left:138.00px;top:851.98px;width:160px;text-align:center;font:400 14.7px/14.7px 'Liberation Sans', sans-serif;color:#000000;white-space:nowrap;letter-spacing:0px;-webkit-text-stroke:0.2px #000;">85</div>
<div style="position:absolute;left:4.80px;top:874.20px;width:160px;text-align:center;font:400 14.7px/14.7px 'Liberation Sans', sans-serif;color:#000000;white-space:nowrap;letter-spacing:0px;-webkit-text-stroke:0.2px #000;">H</div>
<div style="position:absolute;left:138.00px;top:874.20px;width:160px;text-align:center;font:400 14.7px/14.7px 'Liberation Sans', sans-serif;color:#000000;white-space:nowrap;letter-spacing:0px;-webkit-text-stroke:0.2px #000;">25</div>
<div style="position:absolute;left:1901.3px;top:622.1px;width:89.1px;height:20.9px;border:2.7px solid #166a3a;"></div>
<div style="position:absolute;left:1988.6px;top:641.2px;width:9.4px;height:9.4px;background:#ffffff;"></div>
<div style="position:absolute;left:1990px;top:642.6px;width:7px;height:7px;background:#1e6e3f;"></div>
<div style="position:absolute;left:956.00px;top:18.07px;font:700 20px/20px 'Liberation Sans', sans-serif;color:#ffffff;white-space:nowrap;letter-spacing:0px;transform:scaleX(0.91);transform-origin:left top;-webkit-text-stroke:0.35px #fff;">OUTPUTFILE</div>
<div style="position:absolute;left:16.00px;top:65.19px;font:700 17.5px/17.5px 'Liberation Sans', sans-serif;color:#ffffff;white-space:nowrap;letter-spacing:0px;">Home</div>
<div style="position:absolute;left:100.00px;top:65.19px;font:700 17.5px/17.5px 'Liberation Sans', sans-serif;color:#dedede;white-space:nowrap;letter-spacing:0px;">Insert</div>
<div style="position:absolute;left:185.50px;top:65.19px;font:700 17.5px/17.5px 'Liberation Sans', sans-serif;color:#dedede;white-space:nowrap;letter-spacing:0px;">Page Layout</div>
<div style="position:absolute;left:327.00px;top:65.19px;font:700 17.5px/17.5px 'Liberation Sans', sans-serif;color:#dedede;white-space:nowrap;letter-spacing:0px;">Formulas</div>
<div style="position:absolute;left:442.00px;top:65.19px;font:700 17.5px/17.5px 'Liberation Sans', sans-serif;color:#dedede;white-space:nowrap;letter-spacing:0px;">Data</div>
<div style="position:absolute;left:515.00px;top:65.19px;font:700 17.5px/17.5px 'Liberation Sans', sans-serif;color:#dedede;white-space:nowrap;letter-spacing:0px;">Review</div>
<div style="position:absolute;left:609.00px;top:65.19px;font:700 17.5px/17.5px 'Liberation Sans', sans-serif;color:#dedede;white-space:nowrap;letter-spacing:0px;">View</div>
<div style="position:absolute;left:15px;top:87.5px;width:53px;height:4.5px;background:#e0e0e0;border-radius:3px;"></div>
<div style="position:absolute;left:1894px;top:58px;width:92px;height:33.5px;background:#636363;border-radius:5px;"></div>
<div style="position:absolute;left:1930.50px;top:67.31px;font:700 17px/17px 'Liberation Sans', sans-serif;color:#f0f0f0;white-space:nowrap;letter-spacing:0px;">Share</div>
<div style="position:absolute;left:85px;top:1182px;width:152.5px;height:31px;background:#fff;border-radius:0 0 5px 5px;"></div>
<div style="position:absolute;left:86.00px;top:1191.03px;width:150px;text-align:center;font:700 16.5px/16.5px 'Liberation Sans', sans-serif;color:#1e7b43;white-space:nowrap;letter-spacing:0px;">OUTPUTFILE</div>
<div style="position:absolute;left:34.00px;top:1226.83px;font:400 16.5px/16.5px 'Liberation Sans', sans-serif;color:#e6e6e6;white-space:nowrap;letter-spacing:0px; ">Ready</div>
<div style="position:absolute;left:14.70px;top:209.18px;font:400 16.8px/16.8px 'Liberation Sans', sans-serif;color:#eeeeee;white-space:nowrap;letter-spacing:0px;-webkit-text-stroke:0.15px #eee;">U17</div>
<div style="position:absolute;left:160.5px;top:107.8px;width:194.5px;height:31.8px;box-sizing:border-box;background:#353535;border:1px solid #3f3f3f;border-radius:5px;"></div>
<div style="position:absolute;left:358.6px;top:107.8px;width:74.4px;height:31.8px;box-sizing:border-box;background:#353535;border:1px solid #3f3f3f;border-radius:5px;"></div>
<div style="position:absolute;left:443.20px;top:109.76px;font:400 24.5px/24.5px 'Liberation Sans', sans-serif;color:#d8d8d8;white-space:nowrap;letter-spacing:0px;transform:scaleX(0.82);transform-origin:left top;">A</div>
<div style="position:absolute;left:481.00px;top:113.99px;font:400 19.5px/19.5px 'Liberation Sans', sans-serif;color:#d8d8d8;white-space:nowrap;letter-spacing:0px;transform:scaleX(0.82);transform-origin:left top;">A</div>
<div style="position:absolute;left:171.00px;top:157.94px;font:700 18.5px/18.5px 'Liberation Sans', sans-serif;color:#c8c8c8;white-space:nowrap;letter-spacing:0px;">B</div>
<div style="position:absolute;left:206.50px;top:157.52px;font:400 19px/19px 'Liberation Serif', serif;color:#c8c8c8;white-space:nowrap;letter-spacing:0px;font-style:italic;">I</div>
<div style="position:absolute;left:241.80px;top:159.01px;font:400 17px/17px 'Liberation Sans', sans-serif;color:#c8c8c8;white-space:nowrap;letter-spacing:0px;transform:scaleX(0.95);transform-origin:left top;">U</div>
<div style="position:absolute;left:241.6px;top:175.2px;width:12.4px;height:1.5px;background:#c8c8c8;"></div>
<div style="position:absolute;left:384.6px;top:173.6px;width:22.6px;height:5.6px;background:#f5e000;"></div>
<div style="position:absolute;left:441.60px;top:155.72px;font:400 19px/19px 'Liberation Sans', sans-serif;color:#d8d8d8;white-space:nowrap;letter-spacing:0px;transform:scaleX(0.85);transform-origin:left top;">A</div>
<div style="position:absolute;left:437.3px;top:173.6px;width:22.8px;height:5.6px;background:#e8000c;"></div>
<div style="position:absolute;left:607px;top:107px;width:33px;height:33px;background:#4a4a4a;border-radius:5px;"></div>
<div style="position:absolute;left:793.70px;top:116.06px;font:400 15.4px/15.4px 'Liberation Sans', sans-serif;color:#ececec;white-space:nowrap;letter-spacing:0px;-webkit-text-stroke:0.3px #ececec;">Wrap Text</div>
<div style="position:absolute;left:793.70px;top:160.86px;font:400 15.4px/15.4px 'Liberation Sans', sans-serif;color:#ececec;white-space:nowrap;letter-spacing:0px;-webkit-text-stroke:0.3px #ececec;">Merge &amp; Centre</div>
<div style="position:absolute;left:952px;top:107px;width:215px;height:33px;box-sizing:border-box;background:#353535;border:1px solid #3f3f3f;border-radius:5px;"></div>
<div style="position:absolute;left:961.25px;top:116.45px;font:400 16.6px/16.6px 'Liberation Sans', sans-serif;color:#ececec;white-space:nowrap;letter-spacing:0px;-webkit-text-stroke:0.3px #ececec;">General</div>
<div style="position:absolute;left:168.50px;top:115.27px;font:400 17.4px/17.4px 'Liberation Sans', sans-serif;color:#ececec;white-space:nowrap;letter-spacing:0px;-webkit-text-stroke:0.3px #ececec;">Calibri (Body)</div>
<div style="position:absolute;left:366.80px;top:115.61px;font:400 17px/17px 'Liberation Sans', sans-serif;color:#ececec;white-space:nowrap;letter-spacing:0px;-webkit-text-stroke:0.3px #ececec;">12</div>
<div style="position:absolute;left:1178.80px;top:155.59px;width:120px;text-align:center;font:400 15.6px/15.6px 'Liberation Sans', sans-serif;color:#ececec;white-space:nowrap;letter-spacing:0px;-webkit-text-stroke:0.3px #ececec;">Conditional</div>
<div style="position:absolute;left:1178.80px;top:172.29px;width:120px;text-align:center;font:400 15.6px/15.6px 'Liberation Sans', sans-serif;color:#ececec;white-space:nowrap;letter-spacing:0px;-webkit-text-stroke:0.3px #ececec;">Formatting</div>
<div style="position:absolute;left:1257.30px;top:155.59px;width:120px;text-align:center;font:400 15.6px/15.6px 'Liberation Sans', sans-serif;color:#ececec;white-space:nowrap;letter-spacing:0px;-webkit-text-stroke:0.3px #ececec;">Format</div>
<div style="position:absolute;left:1257.30px;top:172.29px;width:120px;text-align:center;font:400 15.6px/15.6px 'Liberation Sans', sans-serif;color:#ececec;white-space:nowrap;letter-spacing:0px;-webkit-text-stroke:0.3px #ececec;">as Table</div>
<div style="position:absolute;left:1326.30px;top:155.59px;width:120px;text-align:center;font:400 15.6px/15.6px 'Liberation Sans', sans-serif;color:#ececec;white-space:nowrap;letter-spacing:0px;-webkit-text-stroke:0.3px #ececec;">Cell</div>
<div style="position:absolute;left:1326.30px;top:172.29px;width:120px;text-align:center;font:400 15.6px/15.6px 'Liberation Sans', sans-serif;color:#ececec;white-space:nowrap;letter-spacing:0px;-webkit-text-stroke:0.3px #ececec;">Styles</div>
<div style="position:absolute;left:1432.30px;top:155.19px;width:100px;text-align:center;font:400 15.6px/15.6px 'Liberation Sans', sans-serif;color:#ececec;white-space:nowrap;letter-spacing:0px;-webkit-text-stroke:0.3px #ececec;">Insert</div>
<div style="position:absolute;left:1501.50px;top:155.19px;width:100px;text-align:center;font:400 15.6px/15.6px 'Liberation Sans', sans-serif;color:#ececec;white-space:nowrap;letter-spacing:0px;-webkit-text-stroke:0.3px #ececec;">Delete</div>
<div style="position:absolute;left:1571.60px;top:155.19px;width:100px;text-align:center;font:400 15.6px/15.6px 'Liberation Sans', sans-serif;color:#ececec;white-space:nowrap;letter-spacing:0px;-webkit-text-stroke:0.3px #ececec;">Format</div>
<div style="position:absolute;left:1719.90px;top:107.69px;font:400 15.6px/15.6px 'Liberation Sans', sans-serif;color:#ececec;white-space:nowrap;letter-spacing:0px;-webkit-text-stroke:0.3px #ececec;">Auto-sum</div>
<div style="position:absolute;left:1719.90px;top:137.89px;font:400 15.6px/15.6px 'Liberation Sans', sans-serif;color:#ececec;white-space:nowrap;letter-spacing:0px;-webkit-text-stroke:0.3px #ececec;">Fill</div>
<div style="position:absolute;left:1719.90px;top:168.59px;font:400 15.6px/15.6px 'Liberation Sans', sans-serif;color:#ececec;white-space:nowrap;letter-spacing:0px;-webkit-text-stroke:0.3px #ececec;">Clear</div>
<div style="position:absolute;left:1795.20px;top:154.49px;width:100px;text-align:center;font:400 15.6px/15.6px 'Liberation Sans', sans-serif;color:#ececec;white-space:nowrap;letter-spacing:0px;-webkit-text-stroke:0.3px #ececec;">Sort &amp;</div>
<div style="position:absolute;left:1794.90px;top:171.29px;width:100px;text-align:center;font:400 15.6px/15.6px 'Liberation Sans', sans-serif;color:#ececec;white-space:nowrap;letter-spacing:0px;-webkit-text-stroke:0.3px #ececec;">Filter</div>
<div style="position:absolute;left:1863.20px;top:154.49px;width:100px;text-align:center;font:400 15.6px/15.6px 'Liberation Sans', sans-serif;color:#ececec;white-space:nowrap;letter-spacing:0px;-webkit-text-stroke:0.3px #ececec;">Find &amp;</div>
<div style="position:absolute;left:1863.10px;top:171.29px;width:100px;text-align:center;font:400 15.6px/15.6px 'Liberation Sans', sans-serif;color:#ececec;white-space:nowrap;letter-spacing:0px;-webkit-text-stroke:0.3px #ececec;">Select</div>
<div style="position:absolute;left:7.30px;top:154.83px;width:80px;text-align:center;font:400 15.2px/15.2px 'Liberation Sans', sans-serif;color:#ececec;white-space:nowrap;letter-spacing:0px;-webkit-text-stroke:0.3px #ececec;">Paste</div>
<div style="position:absolute;left:218.50px;top:204.76px;font:400 24.5px/24.5px 'Liberation Serif', serif;color:#9c9c9c;white-space:nowrap;letter-spacing:0px;transform:scaleX(1.05);transform-origin:left top;-webkit-text-stroke:0.3px #9c9c9c;"><i>fx</i></div>
<div style="position:absolute;left:1557px;top:1218px;width:51px;height:32px;background:#5a5a5a;"></div>
<div style="position:absolute;left:1922.50px;top:1226.58px;font:400 16.8px/16.8px 'Liberation Sans', sans-serif;color:#e6e6e6;white-space:nowrap;letter-spacing:0px; ">100%</div>
<svg style="left:0;top:0" width="2000" height="1250"><path d="M35.3,35.3 V25.8 L44.3,17.3 L53.3,25.8 V35.3 Q53.3,36.8 51.8,36.8 H48.8 Q47.3,36.8 47.3,35.3 V31.2 Q47.3,29.6 45.7,29.6 H42.9 Q41.3,29.6 41.3,31.2 V35.3 Q41.3,36.8 39.8,36.8 H36.8 Q35.3,36.8 35.3,35.3 Z" fill="none" stroke="#fff" stroke-width="1.8" stroke-linejoin="round"/><path d="M75.5,19.3 H87 L91,23.3 V34.7 Q91,36.7 89,36.7 H75.5 Q73.5,36.7 73.5,34.7 V21.3 Q73.5,19.3 75.5,19.3 Z M77,19.3 V23.5 H85.5 V19.3 M76,36.7 V29 H88.5 V36.7" fill="none" stroke="#808080" stroke-width="1.8" stroke-linejoin="round"/><path d="M112.3,16.9 V23.9 H119.3 M112.3,23.9 L117.7,19.3 A6.4,6.4 0 0 1 127.1,27.9 L114.8,38.2" fill="none" stroke="#fff" stroke-width="1.9" stroke-linecap="round" stroke-linejoin="round"/><polyline points="141.80,25.60 145.70,30.60 149.60,25.60" fill="none" stroke="#fff" stroke-width="2" stroke-linecap="round" stroke-linejoin="round"/><path d="M185.2,27 A10.3,10.3 0 1 1 182.3,20.5 M184.3,16.9 V23.4 H177.9" fill="none" stroke="#fff" stroke-width="1.85" stroke-linecap="round" stroke-linejoin="round"/><circle cx="205.7" cy="27.8" r="2.2" fill="#fff"/><circle cx="212.5" cy="27.8" r="2.2" fill="#fff"/><circle cx="219.3" cy="27.8" r="2.2" fill="#fff"/><path d="M932.5,19.6 Q932.5,18 934.1,18 H942.6 L948.8,24.2 V36 Q948.8,37.6 947.2,37.6 H934.1 Q932.5,37.6 932.5,36 Z" fill="#efefef"/><path d="M942.6,18 V24.2 H948.8" fill="#cfcfcf"/><circle cx="1922.9" cy="25.4" r="7.3" fill="none" stroke="#fff" stroke-width="2"/><line x1="1928.3" y1="30.8" x2="1934.5" y2="37" stroke="#fff" stroke-width="2" stroke-linecap="round"/><circle cx="1967.9" cy="25.1" r="3.4" fill="none" stroke="#fff" stroke-width="1.9"/><path d="M1962.3,32.3 Q1962.3,31.7 1962.9,31.7 H1973.4 Q1974,31.7 1974,32.3 C1974,35.2 1971.5,37.5 1968.15,37.5 C1964.8,37.5 1962.3,35.2 1962.3,32.3 Z" fill="none" stroke="#fff" stroke-width="1.9" stroke-linejoin="round"/><path d="M1975.2,17.8 H1980.6 Q1982.4,17.8 1982.4,19.6 V22.6 Q1982.4,24.4 1980.6,24.4 H1977.8 L1975.8,26.6 V24.4 Q1973.6,24.4 1973.6,22.6 V19.6 Q1973.6,17.8 1975.2,17.8 Z" fill="none" stroke="#fff" stroke-width="1.7" stroke-linejoin="round"/><path d="M1906.8,72.3 V82.8 H1919.8 V79.8" fill="none" stroke="#e8e8e8" stroke-width="1.6"/><path d="M1909.5,80 C1910,75.5 1913.5,72.8 1918.5,72.8 V69.3 L1923.3,74.2 L1918.5,79 V75.6 C1914.5,75.6 1911.5,77 1909.5,80 Z" fill="none" stroke="#e8e8e8" stroke-width="1.5" stroke-linejoin="round"/><line x1="145" y1="100" x2="145" y2="186" stroke="#4e4e4e" stroke-width="1.6"/><line x1="520" y1="100" x2="520" y2="186" stroke="#4e4e4e" stroke-width="1.6"/><line x1="745" y1="100" x2="745" y2="186" stroke="#4e4e4e" stroke-width="1.6"/><line x1="938" y1="100" x2="938" y2="186" stroke="#4e4e4e" stroke-width="1.6"/><line x1="1182.5" y1="100" x2="1182.5" y2="186" stroke="#4e4e4e" stroke-width="1.6"/><line x1="1435.5" y1="100" x2="1435.5" y2="186" stroke="#4e4e4e" stroke-width="1.6"/><line x1="1670.2" y1="100" x2="1670.2" y2="186" stroke="#4e4e4e" stroke-width="1.6"/><line x1="293.8" y1="156" x2="293.8" y2="180" stroke="#4e4e4e" stroke-width="1.6"/><line x1="367.4" y1="156" x2="367.4" y2="180" stroke="#4e4e4e" stroke-width="1.6"/><line x1="651.75" y1="111" x2="651.75" y2="136" stroke="#4e4e4e" stroke-width="1.6"/><line x1="651.75" y1="156" x2="651.75" y2="180" stroke="#4e4e4e" stroke-width="1.6"/><line x1="1085.75" y1="156" x2="1085.75" y2="180.5" stroke="#4e4e4e" stroke-width="1.6"/><path d="M25.6,114.5 H50.6 V140 M42,143.5 H25.6 V114.5" fill="none" stroke="#f0a32e" stroke-width="4.4" stroke-linejoin="miter"/><path d="M30.2,117 V112.2 H35 Q35.5,107.8 38.2,107.8 Q40.9,107.8 41.4,112.2 H46.2 V117 Z" fill="#2b2b2b" stroke="#b0b0b0" stroke-width="1.5" stroke-linejoin="round"/><rect x="42.8" y="124.4" width="17.3" height="23.6" fill="#2b2b2b" stroke="#e8e8e8" stroke-width="1.6"/><polyline points="68.80,124.80 72.40,128.70 76.00,124.80" fill="none" stroke="#e8e8e8" stroke-width="1.9" stroke-linecap="round" stroke-linejoin="round"/><path d="M93.5,104.5 L101.5,121 M104.5,104.5 L96.5,121" stroke="#d8d8d8" stroke-width="1.1" fill="none"/><circle cx="94.9" cy="123.8" r="2.4" fill="none" stroke="#3a9ee8" stroke-width="1.6"/><circle cx="103" cy="123.8" r="2.4" fill="none" stroke="#3a9ee8" stroke-width="1.6"/><path d="M96,155.7 H88.2 V135.8 H96.5 L98.3,137.6" fill="none" stroke="#d8d8d8" stroke-width="1.4"/><path d="M96.3,139.3 H104 L109.2,144.5 V156.8 H96.3 Z M104,139.3 V144.5 H109.2" fill="#2b2b2b" stroke="#d8d8d8" stroke-width="1.4" stroke-linejoin="round"/><path d="M99.5,149.5 H106 M99.5,152.3 H106" stroke="#bdbdbd" stroke-width="1"/><polyline points="118.80,144.50 122.40,148.40 126.00,144.50" fill="none" stroke="#e8e8e8" stroke-width="1.9" stroke-linecap="round" stroke-linejoin="round"/><path d="M88.5,177.5 L97.5,172 L104.5,178 L98,185.8 Z" fill="#2b2b2b" stroke="#f5d67a" stroke-width="1.2" stroke-linejoin="round"/><path d="M92,178.5 L101.5,181 L98,185.3 Z" fill="#ec9d2a"/><path d="M97.5,172 L100.5,169.2 L106.5,174.6 L104.5,178 M101.8,170.5 L106.5,165.8 L109,168.3 L104.8,172.7" fill="none" stroke="#d8d8d8" stroke-width="1.3" stroke-linejoin="round"/><polyline points="341.40,121.80 345.00,126.60 348.60,121.80" fill="none" stroke="#e8e8e8" stroke-width="1.9" stroke-linecap="round" stroke-linejoin="round"/><polyline points="419.40,121.80 422.60,126.60 425.80,121.80" fill="none" stroke="#e8e8e8" stroke-width="1.9" stroke-linecap="round" stroke-linejoin="round"/><polyline points="458.5,116.5 461,113.8 463.5,116.5" fill="none" stroke="#3a9ee8" stroke-width="1.5" stroke-linecap="round" stroke-linejoin="round"/><polyline points="494.5,114 497,116.7 499.5,114" fill="none" stroke="#3a9ee8" stroke-width="1.5" stroke-linecap="round" stroke-linejoin="round"/><polyline points="269.60,166.10 273.25,171.00 276.90,166.10" fill="none" stroke="#e8e8e8" stroke-width="1.9" stroke-linecap="round" stroke-linejoin="round"/><rect x="311.7" y="157.7" width="20" height="19" fill="none" stroke="#cfcfcf" stroke-width="1.2" stroke-dasharray="1.3,1.3"/><path d="M321.7,157.7 V176.7 M311.7,167.2 H331.7" fill="none" stroke="#cfcfcf" stroke-width="1.2" stroke-dasharray="1.3,1.3"/><line x1="311" y1="177.2" x2="332.3" y2="177.2" stroke="#dcdcdc" stroke-width="1.6"/><polyline points="343.80,166.10 347.15,171.00 350.50,166.10" fill="none" stroke="#e8e8e8" stroke-width="1.9" stroke-linecap="round" stroke-linejoin="round"/><path d="M389,167.5 L396,160.5 L402.5,167 L396.5,172.5 Z M394.5,162 L394.5,157.5 Q395.8,156.5 397,157.5 V163" fill="none" stroke="#d8d8d8" stroke-width="1.3" stroke-linejoin="round"/><path d="M402.5,163.5 Q404.5,164.5 404.8,170" fill="none" stroke="#5aaeee" stroke-width="1.8" stroke-linecap="round"/><polyline points="417.20,166.10 420.75,171.00 424.30,166.10" fill="none" stroke="#e8e8e8" stroke-width="1.9" stroke-linecap="round" stroke-linejoin="round"/><polyline points="469.40,166.10 473.20,171.00 477.00,166.10" fill="none" stroke="#e8e8e8" stroke-width="1.9" stroke-linecap="round" stroke-linejoin="round"/><line x1="541.25" y1="112.5" x2="561.25" y2="112.5" stroke="#d0d0d0" stroke-width="1.4"/><line x1="544.25" y1="118" x2="558.25" y2="118" stroke="#d0d0d0" stroke-width="1.4"/><line x1="541.25" y1="124.25" x2="561.25" y2="124.25" stroke="#d0d0d0" stroke-width="1.4"/><line x1="577.50" y1="116.75" x2="597.50" y2="116.75" stroke="#d0d0d0" stroke-width="1.4"/><line x1="580.50" y1="122.5" x2="594.50" y2="122.5" stroke="#d0d0d0" stroke-width="1.4"/><line x1="577.50" y1="128.75" x2="597.50" y2="128.75" stroke="#d0d0d0" stroke-width="1.4"/><line x1="613.75" y1="122.5" x2="633.75" y2="122.5" stroke="#d0d0d0" stroke-width="1.4"/><line x1="616.75" y1="128.25" x2="630.75" y2="128.25" stroke="#d0d0d0" stroke-width="1.4"/><line x1="613.75" y1="134.25" x2="633.75" y2="134.25" stroke="#d0d0d0" stroke-width="1.4"/><line x1="541.25" y1="158.25" x2="561.25" y2="158.25" stroke="#d0d0d0" stroke-width="1.4"/><line x1="541.25" y1="163.75" x2="553.25" y2="163.75" stroke="#d0d0d0" stroke-width="1.4"/><line x1="541.25" y1="170" x2="561.25" y2="170" stroke="#d0d0d0" stroke-width="1.4"/><line x1="541.25" y1="175.75" x2="553.25" y2="175.75" stroke="#d0d0d0" stroke-width="1.4"/><line x1="577.50" y1="158.25" x2="597.50" y2="158.25" stroke="#d0d0d0" stroke-width="1.4"/><line x1="581.50" y1="163.75" x2="593.50" y2="163.75" stroke="#d0d0d0" stroke-width="1.4"/><line x1="577.50" y1="170" x2="597.50" y2="170" stroke="#d0d0d0" stroke-width="1.4"/><line x1="581.50" y1="175.75" x2="593.50" y2="175.75" stroke="#d0d0d0" stroke-width="1.4"/><line x1="613.75" y1="158.25" x2="633.75" y2="158.25" stroke="#d0d0d0" stroke-width="1.4"/><line x1="621.75" y1="163.75" x2="633.75" y2="163.75" stroke="#d0d0d0" stroke-width="1.4"/><line x1="613.75" y1="170" x2="633.75" y2="170" stroke="#d0d0d0" stroke-width="1.4"/><line x1="621.75" y1="175.75" x2="633.75" y2="175.75" stroke="#d0d0d0" stroke-width="1.4"/><text x="0" y="0" transform="translate(673.3,130.3) rotate(-45)" font-family="Liberation Sans" font-size="15.5" fill="#dedede" stroke="#dedede" stroke-width="0.3">ab</text><path d="M677,132.8 L689.5,120.3" fill="none" stroke="#3a9ee8" stroke-width="1.5" stroke-linecap="round"/><polygon points="692.2,117.6 685.4,118.2 691.6,124.4" fill="#3a9ee8"/><polyline points="702.05,122.05 705.62,126.20 709.20,122.05" fill="none" stroke="#e8e8e8" stroke-width="1.9" stroke-linecap="round" stroke-linejoin="round"/><line x1="670.5" y1="158.25" x2="690.5" y2="158.25" stroke="#d0d0d0" stroke-width="1.4"/><line x1="680.5" y1="163.75" x2="690.5" y2="163.75" stroke="#d0d0d0" stroke-width="1.4"/><line x1="680.5" y1="170" x2="690.5" y2="170" stroke="#d0d0d0" stroke-width="1.4"/><line x1="670.5" y1="175.75" x2="690.5" y2="175.75" stroke="#d0d0d0" stroke-width="1.4"/><path d="M678.5,166.9 H671.5 M674.3,164 L671.5,166.9 L674.3,169.8" fill="none" stroke="#3a9ee8" stroke-width="1.5" stroke-linecap="round" stroke-linejoin="round"/><line x1="706.75" y1="158.25" x2="726.75" y2="158.25" stroke="#d0d0d0" stroke-width="1.4"/><line x1="716.75" y1="163.75" x2="726.75" y2="163.75" stroke="#d0d0d0" stroke-width="1.4"/><line x1="716.75" y1="170" x2="726.75" y2="170" stroke="#d0d0d0" stroke-width="1.4"/><line x1="706.75" y1="175.75" x2="726.75" y2="175.75" stroke="#d0d0d0" stroke-width="1.4"/><path d="M706.75,166.9 H714.25 M711.45,164 L714.25,166.9 L711.45,169.8" fill="none" stroke="#3a9ee8" stroke-width="1.5" stroke-linecap="round" stroke-linejoin="round"/><text x="765.5" y="123.5" font-family="Liberation Sans" font-size="13.5" fill="#d0d0d0">ab</text><text x="765.5" y="133.6" font-family="Liberation Sans" font-size="13.5" fill="#d0d0d0">c</text><path d="M783,124 Q785,127.5 781.5,129.5 H775.5 M778.3,126.5 L775.3,129.5 L778.3,132.8" fill="none" stroke="#3a9ee8" stroke-width="1.6" stroke-linecap="round" stroke-linejoin="round"/><polyline points="871.90,122.50 875.15,126.20 878.40,122.50" fill="none" stroke="#e8e8e8" stroke-width="1.9" stroke-linecap="round" stroke-linejoin="round"/><rect x="763.4" y="157.9" width="19.3" height="18.9" fill="none" stroke="#cfcfcf" stroke-width="1.4"/><line x1="773" y1="158" x2="773" y2="162" stroke="#cfcfcf" stroke-width="1.2"/><line x1="773" y1="173" x2="773" y2="177" stroke="#cfcfcf" stroke-width="1.2"/><rect x="763.4" y="161.6" width="19.3" height="11.8" fill="none" stroke="#3a9ee8" stroke-width="1.5"/><path d="M766,167.6 H779.6 M768.8,164.9 L766,167.6 L768.8,170.3 M776.8,164.9 L779.6,167.6 L776.8,170.3" fill="none" stroke="#3a9ee8" stroke-width="1.4" stroke-linecap="round" stroke-linejoin="round"/><polyline points="911.10,166.60 914.55,170.80 918.00,166.60" fill="none" stroke="#e8e8e8" stroke-width="1.9" stroke-linecap="round" stroke-linejoin="round"/><polyline points="1153.30,122.30 1156.88,126.70 1160.45,122.30" fill="none" stroke="#e8e8e8" stroke-width="1.9" stroke-linecap="round" stroke-linejoin="round"/><rect x="958.4" y="161.7" width="20.6" height="12.4" fill="none" stroke="#d8d8d8" stroke-width="1.4"/><path d="M964.5,164.6 H962 V171.2 H964.5 M968.5,164.6 H966.3 V171.2 H968.5" fill="none" stroke="#d8d8d8" stroke-width="1.3"/><path d="M969.4,168.8 Q969.4,166.8 974.5,166.8 Q979.6,166.8 979.6,168.8 V177 Q979.6,179 974.5,179 Q969.4,179 969.4,177 Z" fill="#2c2c2c" stroke="#f2d27a" stroke-width="1.3"/><path d="M970.3,170.2 Q974.5,172 978.7,170.2 V172.6 Q974.5,174.4 970.3,172.6 Z M970.3,174.2 Q974.5,176 978.7,174.2 V176.4 Q974.5,178.2 970.3,176.4 Z" fill="#1c1c1c"/><ellipse cx="974.5" cy="168.5" rx="4" ry="1.2" fill="#e8a040"/><polyline points="990.05,166.80 993.75,171.20 997.45,166.80" fill="none" stroke="#e8e8e8" stroke-width="1.9" stroke-linecap="round" stroke-linejoin="round"/><circle cx="1015.6" cy="163.2" r="3.6" fill="none" stroke="#d8d8d8" stroke-width="1.4"/><circle cx="1027.6" cy="173.4" r="3.6" fill="none" stroke="#d8d8d8" stroke-width="1.4"/><line x1="1029.6" y1="158.6" x2="1014" y2="177.8" stroke="#d8d8d8" stroke-width="1.4"/><circle cx="1058.3" cy="164.5" r="3.4" fill="#d8d8d8"/><path d="M1060.5,162 Q1063.8,164.5 1062.5,169.5 Q1061,174.3 1055.3,177" fill="none" stroke="#d8d8d8" stroke-width="2.1" stroke-linecap="round"/><text x="1117.3" y="166.6" font-family="Liberation Sans" font-size="13" fill="#d8d8d8">0</text><text x="1106.6" y="178.2" font-family="Liberation Sans" font-size="13" fill="#d8d8d8">.00</text><path d="M1115.8,163.2 H1104.2 M1107.6,159.8 L1104.2,163.2 L1107.6,166.6" fill="none" stroke="#3a9ee8" stroke-width="1.5" stroke-linecap="round" stroke-linejoin="round"/><text x="1143" y="166.6" font-family="Liberation Sans" font-size="13" fill="#d8d8d8">.00</text><text x="1153" y="178.2" font-family="Liberation Sans" font-size="13" fill="#d8d8d8">0</text><path d="M1139.6,172.9 H1151.2 M1147.8,169.5 L1151.2,172.9 L1147.8,176.3" fill="none" stroke="#3a9ee8" stroke-width="1.5" stroke-linecap="round" stroke-linejoin="round"/><rect x="1210.8" y="111.7" width="37.700000000000045" height="29.10000000000001" fill="none" stroke="#c8c8c8" stroke-width="1.5"/><line x1="1217.2" y1="111.7" x2="1217.2" y2="140.8" stroke="#c8c8c8" stroke-width="1.5"/><line x1="1241.5" y1="111.7" x2="1241.5" y2="140.8" stroke="#c8c8c8" stroke-width="1.5"/><line x1="1210.8" y1="121.3" x2="1248.5" y2="121.3" stroke="#c8c8c8" stroke-width="1.5"/><line x1="1210.8" y1="131" x2="1248.5" y2="131" stroke="#c8c8c8" stroke-width="1.5"/><rect x="1217.4" y="111.7" width="17.8" height="9.6" fill="#b83232" stroke="#e06060" stroke-width="1"/><rect x="1217.4" y="121.9" width="12" height="8.6" fill="#2a78c0" stroke="#56a8e8" stroke-width="1"/><rect x="1217.4" y="131.2" width="20.7" height="9.6" fill="#b83232" stroke="#e06060" stroke-width="1"/><polyline points="1259.60,124.90 1263.10,129.30 1266.60,124.90" fill="none" stroke="#e8e8e8" stroke-width="1.9" stroke-linecap="round" stroke-linejoin="round"/><rect x="1291" y="111.7" width="37.200000000000045" height="29.10000000000001" fill="none" stroke="#c8c8c8" stroke-width="1.5"/><line x1="1303.1" y1="111.7" x2="1303.1" y2="140.8" stroke="#c8c8c8" stroke-width="1.5"/><line x1="1315.7" y1="111.7" x2="1315.7" y2="140.8" stroke="#c8c8c8" stroke-width="1.5"/><line x1="1291" y1="121.3" x2="1328.2" y2="121.3" stroke="#c8c8c8" stroke-width="1.5"/><line x1="1291" y1="131" x2="1328.2" y2="131" stroke="#c8c8c8" stroke-width="1.5"/><rect x="1303.1" y="121.3" width="25.1" height="19.5" fill="#0a64c0" stroke="#5ab0f0" stroke-width="1.2"/><line x1="1315.7" y1="121.3" x2="1315.7" y2="140.8" stroke="#5ab0f0" stroke-width="1"/><line x1="1303.1" y1="131" x2="1328.2" y2="131" stroke="#5ab0f0" stroke-width="1"/><path d="M1330.3,122.3 Q1332.5,124.5 1330,127.5 L1313.5,139.8 L1310,136.5 L1326,123.3 Q1328.5,121.2 1330.3,122.3 Z" fill="#2b2b2b" stroke="#d8d8d8" stroke-width="1.3" stroke-linejoin="round"/><path d="M1309.5,136.8 Q1305,137 1304,141.5 Q1303,145.5 1300.5,146.5 Q1306,149.5 1311.5,146 Q1315.5,143 1313.5,140 Z" fill="#0a64c0" stroke="#5ab0f0" stroke-width="1.2" stroke-linejoin="round"/><polyline points="1339.50,124.90 1343.05,129.30 1346.60,124.90" fill="none" stroke="#e8e8e8" stroke-width="1.9" stroke-linecap="round" stroke-linejoin="round"/><rect x="1360.8" y="111.7" width="37.0" height="29.10000000000001" fill="none" stroke="#c8c8c8" stroke-width="1.5"/><line x1="1366.8" y1="111.7" x2="1366.8" y2="140.8" stroke="#c8c8c8" stroke-width="1.5"/><line x1="1391.8" y1="111.7" x2="1391.8" y2="140.8" stroke="#c8c8c8" stroke-width="1.5"/><line x1="1360.8" y1="118.4" x2="1397.8" y2="118.4" stroke="#c8c8c8" stroke-width="1.5"/><line x1="1360.8" y1="134.5" x2="1397.8" y2="134.5" stroke="#c8c8c8" stroke-width="1.5"/><rect x="1367.2" y="118.6" width="24.2" height="15.8" fill="#0a64c0" stroke="#5ab0f0" stroke-width="1.2"/><path d="M1399.8999999999999,122.3 Q1402.1,124.5 1399.6,127.5 L1383.1,139.8 L1379.6,136.5 L1395.6,123.3 Q1398.1,121.2 1399.8999999999999,122.3 Z" fill="#2b2b2b" stroke="#d8d8d8" stroke-width="1.3" stroke-linejoin="round"/><path d="M1379.1,136.8 Q1374.6,137 1373.6,141.5 Q1372.6,145.5 1370.1,146.5 Q1375.6,149.5 1381.1,146 Q1385.1,143 1383.1,140 Z" fill="#0a64c0" stroke="#5ab0f0" stroke-width="1.2" stroke-linejoin="round"/><polyline points="1409.10,124.90 1412.65,129.30 1416.20,124.90" fill="none" stroke="#e8e8e8" stroke-width="1.9" stroke-linecap="round" stroke-linejoin="round"/><rect x="1456.2" y="111.9" width="37.59999999999991" height="28.900000000000006" fill="none" stroke="#c8c8c8" stroke-width="1.5"/><line x1="1468.7" y1="111.9" x2="1468.7" y2="140.8" stroke="#c8c8c8" stroke-width="1.5"/><line x1="1481.3" y1="111.9" x2="1481.3" y2="140.8" stroke="#c8c8c8" stroke-width="1.5"/><line x1="1456.2" y1="121.1" x2="1493.8" y2="121.1" stroke="#c8c8c8" stroke-width="1.5"/><line x1="1456.2" y1="131" x2="1493.8" y2="131" stroke="#c8c8c8" stroke-width="1.5"/><rect x="1461.5" y="121.6" width="35" height="9.7" fill="#0a64c0" stroke="#5ab0f0" stroke-width="1.1"/><line x1="1481.3" y1="121.6" x2="1481.3" y2="131.3" stroke="#5ab0f0" stroke-width="1"/><path d="M1471.5,125.8 H1454.5 M1462.3,117.3 L1454,125.8 L1462.3,134.3" fill="none" stroke="#5ab0f0" stroke-width="1.6" stroke-linecap="round" stroke-linejoin="round"/><polyline points="1505.20,125.20 1508.35,129.10 1511.50,125.20" fill="none" stroke="#e8e8e8" stroke-width="1.9" stroke-linecap="round" stroke-linejoin="round"/><path d="M1525.8,121.1 V111.9 H1563.1 V141.2 H1525.8 V131.6 M1538,111.9 V121 M1550.5,111.9 V120 M1538,131.6 V141.2 M1550.5,134 V141.2 M1525.8,121.1 H1531 M1525.8,131.6 H1531" fill="none" stroke="#c8c8c8" stroke-width="1.5"/><path d="M1531.2,121.6 H1548 L1553.5,126.4 L1548,131.2 H1531.2 Z" fill="#0a64c0" stroke="#5ab0f0" stroke-width="1.1"/><line x1="1542" y1="121.6" x2="1542" y2="131.2" stroke="#5ab0f0" stroke-width="1"/><path d="M1550,120 L1565.5,134.5 M1565.5,120 L1550,134.5" stroke="#e84848" stroke-width="1.6" stroke-linecap="round"/><polyline points="1574.50,125.20 1577.65,129.10 1580.80,125.20" fill="none" stroke="#e8e8e8" stroke-width="1.9" stroke-linecap="round" stroke-linejoin="round"/><rect x="1595.1" y="111.9" width="37.30000000000018" height="28.900000000000006" fill="none" stroke="#c8c8c8" stroke-width="1.5"/><line x1="1605.1" y1="111.9" x2="1605.1" y2="140.8" stroke="#c8c8c8" stroke-width="1.5"/><line x1="1623.2" y1="111.9" x2="1623.2" y2="140.8" stroke="#c8c8c8" stroke-width="1.5"/><line x1="1595.1" y1="121.1" x2="1632.4" y2="121.1" stroke="#c8c8c8" stroke-width="1.5"/><line x1="1595.1" y1="131" x2="1632.4" y2="131" stroke="#c8c8c8" stroke-width="1.5"/><rect x="1605" y="121.6" width="18.2" height="9.7" fill="#0a64c0" stroke="#5ab0f0" stroke-width="1.1"/><path d="M1603.5,106.3 H1624.5 M1603.5,104 V108.5 M1624.5,104 V108.5" fill="none" stroke="#3a9ee8" stroke-width="1.6"/><polyline points="1643.80,125.20 1647.15,129.10 1650.50,125.20" fill="none" stroke="#e8e8e8" stroke-width="1.9" stroke-linecap="round" stroke-linejoin="round"/><path d="M1707.8,109 V106.5 H1692.3 L1700.6,115.3 L1692.3,124.1 H1707.8 V121.6" fill="none" stroke="#d8d8d8" stroke-width="1.5" stroke-linejoin="miter"/><polyline points="1797.00,113.90 1800.40,118.20 1803.80,113.90" fill="none" stroke="#e8e8e8" stroke-width="1.9" stroke-linecap="round" stroke-linejoin="round"/><rect x="1689.8" y="136.5" width="20.3" height="18.2" fill="none" stroke="#cfcfcf" stroke-width="1.4"/><line x1="1689.8" y1="139.5" x2="1710.1" y2="139.5" stroke="#cfcfcf" stroke-width="1.1"/><path d="M1699.3,142.5 V151.5 M1695.2,147.6 L1699.3,151.6 L1703.4,147.6" fill="none" stroke="#3a9ee8" stroke-width="1.5" stroke-linecap="round" stroke-linejoin="round"/><polyline points="1749.10,144.30 1752.30,148.30 1755.50,144.30" fill="none" stroke="#e8e8e8" stroke-width="1.9" stroke-linecap="round" stroke-linejoin="round"/><path d="M1689.8,178.6 L1693.9,174.5 L1702.2,182.8 L1698.1,186.9 Z" fill="#9a32b2"/><path d="M1701.6,167.2 L1709.6,175.2 L1698.1,186.9 L1689.8,178.6 Z" fill="none" stroke="#dc8cec" stroke-width="1.5" stroke-linejoin="round"/><line x1="1693.9" y1="174.5" x2="1702.2" y2="182.8" stroke="#dc8cec" stroke-width="1.3"/><polyline points="1765.20,175.10 1768.75,179.10 1772.30,175.10" fill="none" stroke="#e8e8e8" stroke-width="1.9" stroke-linecap="round" stroke-linejoin="round"/><path d="M1818,124.9 L1824.2,108.8 L1830.4,124.9 M1820.4,119 H1828" fill="none" stroke="#3a9ee8" stroke-width="1.5"/><path d="M1818.3,128.2 H1829.5 L1818.3,143.8 H1830" fill="none" stroke="#d8d8d8" stroke-width="1.4"/><path d="M1834.8,116.9 H1855.6 V119.6 L1848.3,127.7 V138.3 H1842.1 V127.7 L1834.8,119.6 Z" fill="none" stroke="#d8d8d8" stroke-width="1.4" stroke-linejoin="round"/><polyline points="1866.70,124.70 1870.10,129.10 1873.50,124.70" fill="none" stroke="#e8e8e8" stroke-width="1.9" stroke-linecap="round" stroke-linejoin="round"/><circle cx="1911" cy="121.6" r="14" fill="none" stroke="#d8d8d8" stroke-width="1.5"/><line x1="1901" y1="132.5" x2="1886" y2="146.6" stroke="#d8d8d8" stroke-width="1.5" stroke-linecap="round"/><polyline points="1935.90,124.70 1939.50,129.10 1943.10,124.70" fill="none" stroke="#e8e8e8" stroke-width="1.9" stroke-linecap="round" stroke-linejoin="round"/><polygon points="100.8,213.1 106,204.7 111.3,213.1" fill="#bdbdbd"/><polygon points="100.8,221.5 106,229.9 111.3,221.5" fill="#bdbdbd"/><path d="M140,211 L153,224 M153,211 L140,224" stroke="#585858" stroke-width="2.9"/><path d="M178.6,216.8 L185,223.5 L196.6,211.6" fill="none" stroke="#585858" stroke-width="2.9"/><polygon points="1984,213 1994.4,213 1989.2,221" fill="#bdbdbd"/><polygon points="30.9,1194.4 20.8,1201.5 30.9,1208.5" fill="#5c5c5c"/><polygon points="52.8,1194.4 62.9,1201.5 52.8,1208.5" fill="#5c5c5c"/><path d="M265,1193.5 V1207.5 M258,1200.5 H272" stroke="#bbbbbb" stroke-width="2.6"/><line x1="290.7" y1="1183" x2="290.7" y2="1211" stroke="#555" stroke-width="1.3"/><rect x="1574.4" y="1225.8" width="16.4" height="16.4" rx="1" fill="none" stroke="#f4f4f4" stroke-width="1.7"/><path d="M1579.6,1225.8 V1242.2 M1585.6,1225.8 V1242.2 M1574.4,1231 H1590.8 M1574.4,1236.8 H1590.8" stroke="#f4f4f4" stroke-width="1.6"/><rect x="1624" y="1225.8" width="17.2" height="16.4" rx="1" fill="none" stroke="#f0f0f0" stroke-width="1.7"/><rect x="1627.8" y="1229" width="9.4" height="10.6" fill="none" stroke="#f0f0f0" stroke-width="1.5"/><path d="M1630,1231.6 H1635.2 M1630,1234.3 H1635.2 M1630,1237 H1635.2" stroke="#f0f0f0" stroke-width="1.4"/><path d="M1673.2,1225.8 H1690.8 Q1691.6,1225.8 1691.6,1226.6 V1241.4 Q1691.6,1242.2 1690.8,1242.2 H1673.2 Q1672.4,1242.2 1672.4,1241.4 V1226.6 Q1672.4,1225.8 1673.2,1225.8 Z M1678.4,1225.8 V1234.4 M1684.4,1225.8 V1235.8 H1672.4" fill="none" stroke="#f0f0f0" stroke-width="1.7"/><line x1="1718" y1="1234.2" x2="1729" y2="1234.2" stroke="#f0f0f0" stroke-width="2.6"/><line x1="1741" y1="1234.5" x2="1876" y2="1234.5" stroke="#6e6e6e" stroke-width="5.5" stroke-linecap="round"/><circle cx="1808.5" cy="1234" r="11" fill="#9a9a9a"/><path d="M1893,1228.5 V1240 M1887.3,1234.2 H1898.7" stroke="#f0f0f0" stroke-width="2.6"/></svg>
</body></html>
